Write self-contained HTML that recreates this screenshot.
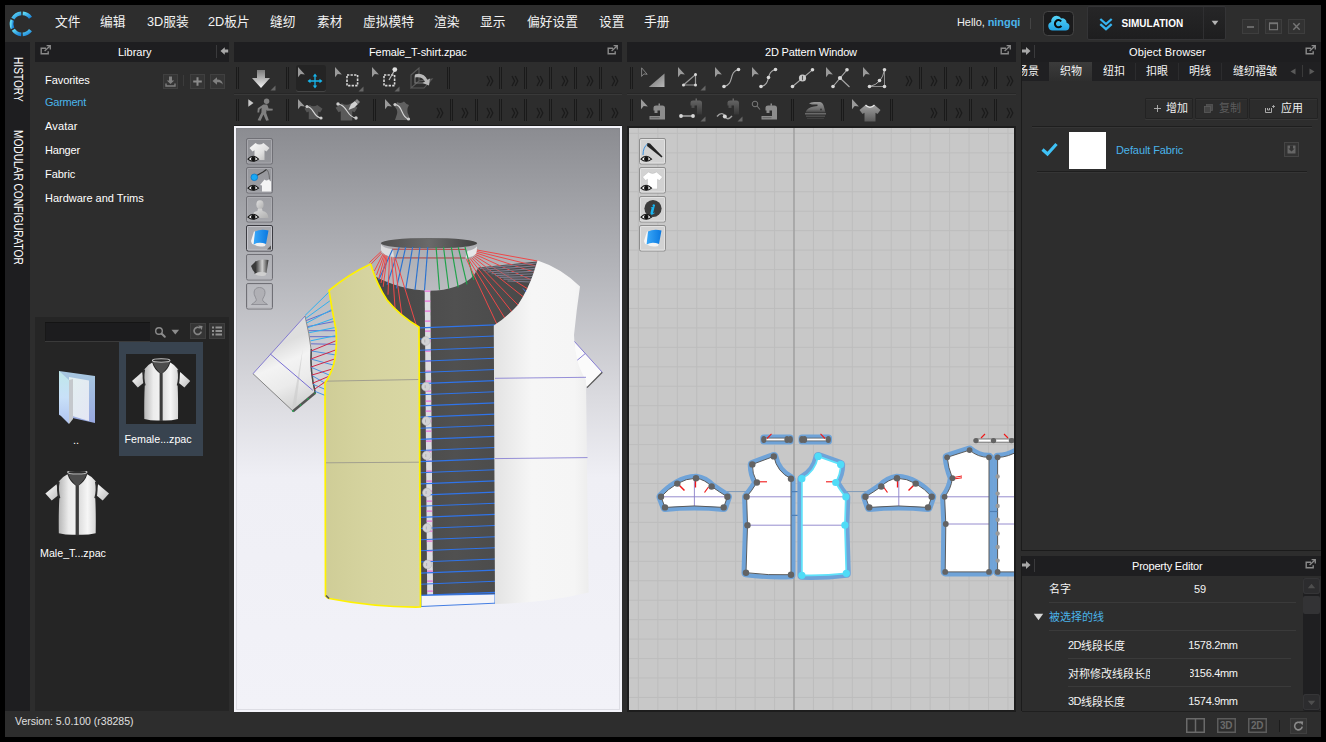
<!DOCTYPE html>
<html><head><meta charset="utf-8"><title>CLO - Female_T-shirt.zpac</title>
<style>
html,body{margin:0;padding:0;}
body{width:1326px;height:742px;background:#000;overflow:hidden;position:relative;font-family:"Liberation Sans", sans-serif;}
.a{position:absolute;display:block;}
.t{white-space:nowrap;line-height:1.2;}
.h{color:transparent;overflow:hidden;white-space:nowrap;line-height:1.4;user-select:none;}
.b{font-weight:bold;}
svg text{font-family:"Liberation Sans", "Noto Sans CJK SC", sans-serif;}
</style></head><body>
<div class="a" style="left:5px;top:5px;width:1316px;height:732px;background:#2d2d2d;"></div><svg class="a" style="left:5px;top:7px;" width="32" height="32" viewBox="0 0 32 32"><defs><linearGradient id="lg" x1="0" y1="0" x2="1" y2="1"><stop offset="0" stop-color="#5fd8f5"/><stop offset="1" stop-color="#1b83d8"/></linearGradient></defs><path d="M17.73 6.43A10.5 10.5 0 0 1 25.49 10.73" fill="none" stroke="url(#lg)" stroke-width="3.7"/><path d="M25.49 23.07A10.5 10.5 0 0 1 17.73 27.37" fill="none" stroke="url(#lg)" stroke-width="3.7"/><path d="M16.27 27.37A10.5 10.5 0 0 1 8.30 22.77" fill="none" stroke="url(#lg)" stroke-width="3.7"/><path d="M7.56 21.50A10.5 10.5 0 0 1 7.26 12.97" fill="none" stroke="url(#lg)" stroke-width="3.7"/><path d="M7.91 11.65A10.5 10.5 0 0 1 16.27 6.43" fill="none" stroke="url(#lg)" stroke-width="3.7"/></svg><svg class="a" style="left:54.6px;top:13.1px" width="28" height="17.8" viewBox="0 -12.8 28 17.8"><text x="0" y="0" font-size="12.75" fill="#f2f2f2">文件</text></svg><svg class="a" style="left:100.4px;top:13.1px" width="28" height="17.8" viewBox="0 -12.8 28 17.8"><text x="0" y="0" font-size="12.75" fill="#f2f2f2">编辑</text></svg><svg class="a" style="left:146.6px;top:13.1px" width="44" height="17.8" viewBox="0 -12.8 44 17.8"><text x="0" y="0" font-size="12.75" fill="#f2f2f2">3D服装</text></svg><svg class="a" style="left:208.2px;top:13.1px" width="44" height="17.8" viewBox="0 -12.8 44 17.8"><text x="0" y="0" font-size="12.75" fill="#f2f2f2">2D板片</text></svg><svg class="a" style="left:270.2px;top:13.1px" width="28" height="17.8" viewBox="0 -12.8 28 17.8"><text x="0" y="0" font-size="12.75" fill="#f2f2f2">缝纫</text></svg><svg class="a" style="left:316.5px;top:13.1px" width="28" height="17.8" viewBox="0 -12.8 28 17.8"><text x="0" y="0" font-size="12.75" fill="#f2f2f2">素材</text></svg><svg class="a" style="left:362.6px;top:13.1px" width="53" height="17.8" viewBox="0 -12.8 53 17.8"><text x="0" y="0" font-size="12.75" fill="#f2f2f2">虚拟模特</text></svg><svg class="a" style="left:434.2px;top:13.1px" width="28" height="17.8" viewBox="0 -12.8 28 17.8"><text x="0" y="0" font-size="12.75" fill="#f2f2f2">渲染</text></svg><svg class="a" style="left:480.4px;top:13.1px" width="28" height="17.8" viewBox="0 -12.8 28 17.8"><text x="0" y="0" font-size="12.75" fill="#f2f2f2">显示</text></svg><svg class="a" style="left:526.7px;top:13.1px" width="53" height="17.8" viewBox="0 -12.8 53 17.8"><text x="0" y="0" font-size="12.75" fill="#f2f2f2">偏好设置</text></svg><svg class="a" style="left:598.5px;top:13.1px" width="28" height="17.8" viewBox="0 -12.8 28 17.8"><text x="0" y="0" font-size="12.75" fill="#f2f2f2">设置</text></svg><svg class="a" style="left:644.4px;top:13.1px" width="28" height="17.8" viewBox="0 -12.8 28 17.8"><text x="0" y="0" font-size="12.75" fill="#f2f2f2">手册</text></svg><div class="a t" style="left:957px;top:16px;font-size:11px;letter-spacing:-0.07px;color:#f0f0f0">Hello, <b style="color:#4ab4ea">ningqi</b></div><div class="a" style="left:1030px;top:18px;width:1px;height:11px;background:#444;"></div><svg class="a" style="left:1043px;top:10.5px;" width="31" height="25" viewBox="0 0 31 25"><defs><linearGradient id="cg" x1="0" y1="0" x2="0" y2="1"><stop offset="0" stop-color="#55d4f8"/><stop offset="1" stop-color="#22a4e4"/></linearGradient></defs><rect x="0.5" y="0.5" width="30" height="24" rx="4" fill="#1b1b1c" stroke="#444" /><path d="M9.5 19.5a4.3 4.3 0 0 1 -1.2 -8.4a5.2 5.2 0 0 1 5.2 -6.3a5.6 5.6 0 0 1 4.8 2.6a4.4 4.4 0 0 1 5.3 4.3a4 4 0 0 1 -1.6 7.8z" fill="url(#cg)"/><path d="M18.2 10.3a3.6 3.6 0 1 0 0.2 4.6" fill="none" stroke="#0a0a0a" stroke-width="2"/></svg><div class="a" style="left:1087px;top:6px;width:139px;height:34px;background:#222223;border-radius:2px;box-sizing:border-box;border:1px solid #343436;background:linear-gradient(#262627,#1e1e1f)"></div><div class="a" style="left:1203px;top:7px;width:1px;height:32px;background:#2f2f31;"></div><svg class="a" style="left:1098px;top:16px;" width="16" height="16" viewBox="0 0 16 16"><path d="M2.3 3L8 8L13.7 3M2.3 8.2L8 13.2L13.7 8.2" fill="none" stroke="#36b4f0" stroke-width="2.3"/></svg><div class="a t " style="left:1121.5px;top:17.5px;font-size:10px;color:#fff;font-weight:bold;letter-spacing:0.02px">SIMULATION</div><svg class="a" style="left:1211px;top:20px;" width="8" height="6" viewBox="0 0 8 6"><path d="M0.6 0.8h6.8l-3.4 4.4z" fill="#b4b4b4"/></svg><svg class="a" style="left:1242px;top:18.5px;" width="17" height="15" viewBox="0 0 17 15"><rect x="0.5" y="0.5" width="16" height="14" fill="#323232" stroke="#3e3e3e"/><path d="M5 8h7" stroke="#767676" stroke-width="1.6"/></svg><svg class="a" style="left:1265px;top:18.5px;" width="17" height="15" viewBox="0 0 17 15"><rect x="0.5" y="0.5" width="16" height="14" fill="#323232" stroke="#3e3e3e"/><rect x="4.5" y="4.3" width="8" height="6.4" fill="none" stroke="#767676" stroke-width="1.1"/><path d="M4 4.3h9" stroke="#767676" stroke-width="1.8"/></svg><svg class="a" style="left:1287.5px;top:18.5px;" width="17" height="15" viewBox="0 0 17 15"><rect x="0.5" y="0.5" width="16" height="14" fill="#323232" stroke="#3e3e3e"/><path d="M5.3 4.3l6.4 6.4m0 -6.4l-6.4 6.4" stroke="#767676" stroke-width="1.4"/></svg><div class="a" style="left:5px;top:42px;width:25px;height:669px;background:#1e1e20;"></div><div class="a t" style="left:25.5px;top:56.5px;font-size:13px;color:#fff;transform-origin:0 0;transform:rotate(90deg) scale(0.78,1)">HISTORY</div><div class="a t" style="left:25.5px;top:129.5px;font-size:13px;color:#fff;transform-origin:0 0;transform:rotate(90deg) scale(0.78,1)">MODULAR CONFIGURATOR</div><div class="a t " style="left:15px;top:714.5px;font-size:10.5px;color:#e0e0e0;">Version: 5.0.100 (r38285)</div><svg class="a" style="left:1186px;top:718px;" width="19" height="15" viewBox="0 0 19 15"><rect x="0.75" y="0.75" width="17.5" height="13.5" fill="none" stroke="#6a6a6a" stroke-width="1.5"/><path d="M9.5 1v13" stroke="#6a6a6a" stroke-width="1.5"/></svg><svg class="a" style="left:1217px;top:718px;" width="19" height="15" viewBox="0 0 19 15"><rect x="0.75" y="0.75" width="17.5" height="13.5" fill="none" stroke="#5c5c5c" stroke-width="1.5"/></svg><div class="a t " style="left:1220px;top:720px;font-size:10px;color:#6a6a6a;font-weight:bold;letter-spacing:-0.3px">3D</div><svg class="a" style="left:1248px;top:718px;" width="19" height="15" viewBox="0 0 19 15"><rect x="0.75" y="0.75" width="17.5" height="13.5" fill="none" stroke="#5c5c5c" stroke-width="1.5"/></svg><div class="a t " style="left:1251px;top:720px;font-size:10px;color:#6a6a6a;font-weight:bold;letter-spacing:-0.3px">2D</div><div class="a" style="left:1279px;top:720px;width:1px;height:12px;background:#1c1c1c;"></div><svg class="a" style="left:1290px;top:717.5px;" width="17" height="16" viewBox="0 0 17 16"><rect x="0.5" y="0.5" width="16" height="15" fill="#353535" stroke="#404040"/><path d="M12.2 8.6a3.8 3.8 0 1 1 -1.5 -3.6" fill="none" stroke="#8a8a8a" stroke-width="1.6"/><path d="M9.2 3.2l4 0.2l-0.6 3.8z" fill="#8a8a8a"/></svg><div class="a" style="left:35px;top:42px;width:194px;height:20px;background:#1e1e20;"></div><svg class="a" style="left:40px;top:45px;" width="12" height="11" viewBox="0 0 12 11"><path d="M6 3.2H1.2V8.8H8.2V6.2" fill="none" stroke="#8a8a8a" stroke-width="1.4"/><path d="M4.6 5.9L10 0.9M6.6 0.7h3.7v3.7" fill="none" stroke="#8a8a8a" stroke-width="1.3"/></svg><div class="a t " style="left:118px;top:45.5px;font-size:11px;color:#fff;">Library</div><div class="a" style="left:216px;top:45px;width:1px;height:13px;background:#3a3a3c;"></div><svg class="a" style="left:220px;top:46px;" width="9" height="10" viewBox="0 0 9 10"><path d="M0.5 5L4.8 1.2v2.3h3.4v3h-3.4v2.3z" fill="#a8a8a8"/></svg><div class="a t " style="left:45px;top:74px;font-size:11px;color:#fff;letter-spacing:-0.065px">Favorites</div><div class="a t " style="left:45px;top:96px;font-size:11px;color:#4ab4ea;letter-spacing:-0.25px">Garment</div><div class="a t " style="left:45px;top:120px;font-size:11px;color:#fff;letter-spacing:0.16px">Avatar</div><div class="a t " style="left:45px;top:144px;font-size:11px;color:#fff;letter-spacing:-0.19px">Hanger</div><div class="a t " style="left:45px;top:168px;font-size:11px;color:#fff;letter-spacing:-0.06px">Fabric</div><div class="a t " style="left:45px;top:192px;font-size:11px;color:#fff;letter-spacing:-0.02px">Hardware and Trims</div><svg class="a" style="left:163px;top:73.5px;" width="15" height="15" viewBox="0 0 15 15"><rect x="0.5" y="0.5" width="14" height="14" fill="#353535" stroke="#404040"/><path d="M6 2.5h3v4h2.2L7.5 10L3.8 6.5H6z" fill="#808080"/><path d="M3 9.5v2.5h9V9.5" fill="none" stroke="#808080" stroke-width="1.4"/></svg><div class="a" style="left:183px;top:75px;width:1px;height:11px;background:#3c3c3c;"></div><svg class="a" style="left:190px;top:73.5px;" width="15" height="15" viewBox="0 0 15 15"><rect x="0.5" y="0.5" width="14" height="14" fill="#353535" stroke="#404040"/><path d="M7.5 3.2v8.6M3.2 7.5h8.6" stroke="#8a8a8a" stroke-width="2"/></svg><svg class="a" style="left:210px;top:73.5px;" width="15" height="15" viewBox="0 0 15 15"><rect x="0.5" y="0.5" width="14" height="14" fill="#353535" stroke="#404040"/><path d="M2.5 7L7 3.2v2.3c3.5 0 5.5 1.8 5.8 5c-1.3-1.7-3-2.3-5.8-2.2v2.4z" fill="#808080"/></svg><div class="a" style="left:35px;top:317px;width:194px;height:394px;background:#252525;"></div><div class="a" style="left:45px;top:322px;width:105px;height:18.5px;background:#1c1c1e;box-shadow:inset 0 1px 0 #141414, inset 1px 0 0 #181818, 0 1px 0 #3a3a3a"></div><svg class="a" style="left:154px;top:326px;" width="13" height="13" viewBox="0 0 13 13"><circle cx="5" cy="5" r="3.3" fill="none" stroke="#8c8c8c" stroke-width="1.4"/><path d="M7.5 7.5l3.3 3.3" stroke="#8c8c8c" stroke-width="2" stroke-linecap="round"/></svg><svg class="a" style="left:171px;top:329px;" width="9" height="7" viewBox="0 0 9 7"><path d="M0.5 0.8h7.6l-3.8 4.8z" fill="#8c8c8c"/></svg><svg class="a" style="left:190px;top:323px;" width="16" height="16" viewBox="0 0 16 16"><rect x="0.5" y="0.5" width="15" height="15" fill="#353535" stroke="#404040"/><path d="M11.2 8.6a3.6 3.6 0 1 1 -1.3 -3.6" fill="none" stroke="#858585" stroke-width="1.7"/><path d="M8.3 2.6l4.3 0.3l-0.8 4z" fill="#858585"/></svg><svg class="a" style="left:209px;top:323px;" width="16" height="16" viewBox="0 0 16 16"><rect x="0.5" y="0.5" width="15" height="15" fill="#353535" stroke="#404040"/><path d="M3 4.5h2M3 8h2M3 11.5h2" stroke="#909090" stroke-width="1.8"/><path d="M6.5 4.5h6.5M6.5 8h6.5M6.5 11.5h6.5" stroke="#909090" stroke-width="1.8"/></svg><div class="a" style="left:119px;top:342px;width:84px;height:114px;background:#38434f;"></div><div class="a" style="left:126px;top:354px;width:70px;height:70px;background:#222222;"></div><svg class="a" style="left:126px;top:354px;" width="70" height="70" viewBox="0 0 70 70"><defs><linearGradient id="fa" x1="0" x2="1"><stop offset="0" stop-color="#b4b4b4"/><stop offset="0.6" stop-color="#ececec"/><stop offset="1" stop-color="#f2f2f2"/></linearGradient><linearGradient id="fb" x1="0" x2="1"><stop offset="0" stop-color="#dcdcdc"/><stop offset="0.5" stop-color="#f6f6f6"/><stop offset="1" stop-color="#d4d4d4"/></linearGradient><linearGradient id="fc" x1="0" y1="0" x2="1" y2="1"><stop offset="0" stop-color="#ffffff"/><stop offset="1" stop-color="#bcbcbc"/></linearGradient></defs><path d="M26.4 7.5Q35.2 10.5 44.1 7.5L41.5 13L36.2 19.5H34.2L29 13z" fill="#4c4c4c"/><ellipse cx="35.2" cy="6.5" rx="8.8" ry="1.7" fill="#2c2c2c" stroke="#c4c4c4" stroke-width="1.1"/><path d="M16.2 18L6 27L11.8 33.6L18.3 28.2z" fill="url(#fc)"/><path d="M54.2 18L64.2 27L58.4 33.6L52 28.2z" fill="url(#fc)"/><path d="M18.2 15.5Q22 10.5 26.2 8.5Q28 15 33.8 19.5L33.8 66.5Q26 67 18.3 65Q18 45 18.8 31Q16.8 24 18.2 15.5z" fill="url(#fa)"/><path d="M52.2 15.5Q48.5 10.5 44.3 8.5Q42.5 15 36.4 19.5L36.4 66.5Q44 67 52 65Q52.3 45 51.6 31Q53.6 24 52.2 15.5z" fill="url(#fb)"/><path d="M33.8 19.5h2.6v47.5h-2.6z" fill="#3c3c3c"/><path d="M18.2 15.5Q16.6 24 18.8 31.5" fill="none" stroke="#2c2c2c" stroke-width="1.8"/><path d="M52.2 15.5Q53.8 24 51.6 31.5" fill="none" stroke="#2c2c2c" stroke-width="1.8"/></svg><div class="a t " style="left:124.5px;top:433.2px;font-size:10.7px;color:#fff;">Female...zpac</div><svg class="a" style="left:59px;top:371px;" width="37" height="54" viewBox="0 0 37 54"><defs><linearGradient id="fo1" x1="0" y1="0" x2="0" y2="1"><stop offset="0" stop-color="#bfe8ea"/><stop offset="0.5" stop-color="#c8e0f8"/><stop offset="1" stop-color="#b0c4f0"/></linearGradient><linearGradient id="fo2" x1="0" y1="0" x2="1" y2="1"><stop offset="0" stop-color="#e2f0f0"/><stop offset="1" stop-color="#e4e6f4"/></linearGradient><linearGradient id="fo3" x1="0" y1="0" x2="0" y2="1"><stop offset="0" stop-color="#a8c8e0"/><stop offset="1" stop-color="#98a8e0"/></linearGradient></defs><path d="M0 0L36 5V52L0 44z" fill="url(#fo3)"/><path d="M10 6L30 9.5V50L10 44z" fill="url(#fo2)"/><path d="M0 0L10 9V53L0 43z" fill="url(#fo1)"/><path d="M10 9L14 8V48L10 53z" fill="#c4c8cc"/></svg><div class="a t " style="left:73px;top:433.5px;font-size:11px;color:#fff;">..</div><svg class="a" style="left:45px;top:470.5px;" width="64" height="66" viewBox="0 0 64 66"><g transform="translate(-6.2,-5.6) scale(1.094,1.043)"><path d="M26.4 7.5Q35.2 10.5 44.1 7.5L41.5 13L36.2 19.5H34.2L29 13z" fill="#4c4c4c"/><ellipse cx="35.2" cy="6.5" rx="8.8" ry="1.7" fill="#2c2c2c" stroke="#c4c4c4" stroke-width="1.1"/><path d="M16.2 18L6 27L11.8 33.6L18.3 28.2z" fill="url(#fc)"/><path d="M54.2 18L64.2 27L58.4 33.6L52 28.2z" fill="url(#fc)"/><path d="M18.2 15.5Q22 10.5 26.2 8.5Q28 15 33.8 19.5L33.8 66.5Q26 67 18.3 65Q18 45 18.8 31Q16.8 24 18.2 15.5z" fill="url(#fa)"/><path d="M52.2 15.5Q48.5 10.5 44.3 8.5Q42.5 15 36.4 19.5L36.4 66.5Q44 67 52 65Q52.3 45 51.6 31Q53.6 24 52.2 15.5z" fill="url(#fb)"/><path d="M33.8 19.5h2.6v47.5h-2.6z" fill="#3c3c3c"/><path d="M18.2 15.5Q16.6 24 18.8 31.5" fill="none" stroke="#2c2c2c" stroke-width="1.8"/><path d="M52.2 15.5Q53.8 24 51.6 31.5" fill="none" stroke="#2c2c2c" stroke-width="1.8"/></g></svg><div class="a t " style="left:40px;top:547.2px;font-size:10.7px;color:#fff;">Male_T...zpac</div><div class="a" style="left:234px;top:42px;width:388px;height:20px;background:#1e1e20;"></div><div class="a t " style="left:369px;top:45.5px;font-size:11px;color:#fff;letter-spacing:-0.1px">Female_T-shirt.zpac</div><svg class="a" style="left:607px;top:45px;" width="12" height="11" viewBox="0 0 12 11"><path d="M6 3.2H1.2V8.8H8.2V6.2" fill="none" stroke="#8a8a8a" stroke-width="1.4"/><path d="M4.6 5.9L10 0.9M6.6 0.7h3.7v3.7" fill="none" stroke="#8a8a8a" stroke-width="1.3"/></svg><div class="a" style="left:234px;top:93px;width:388px;height:1px;background:#272727;"></div><div class="a" style="left:234px;top:94px;width:388px;height:1px;background:#393939;"></div><div class="a" style="left:627px;top:93px;width:389px;height:1px;background:#272727;"></div><div class="a" style="left:627px;top:94px;width:389px;height:1px;background:#393939;"></div><div class="a" style="left:236px;top:67px;width:1px;height:22px;background:#1a1a1a;"></div><div class="a" style="left:238px;top:67px;width:1px;height:22px;background:#1a1a1a;"></div><div class="a" style="left:285.8px;top:67px;width:1px;height:22px;background:#1a1a1a;"></div><div class="a" style="left:287.8px;top:67px;width:1px;height:22px;background:#1a1a1a;"></div><div class="a" style="left:447px;top:67px;width:1px;height:22px;background:#1a1a1a;"></div><div class="a" style="left:449px;top:67px;width:1px;height:22px;background:#1a1a1a;"></div><div class="a" style="left:499px;top:67px;width:1px;height:22px;background:#1a1a1a;"></div><div class="a" style="left:501px;top:67px;width:1px;height:22px;background:#1a1a1a;"></div><div class="a" style="left:524px;top:67px;width:1px;height:22px;background:#1a1a1a;"></div><div class="a" style="left:526px;top:67px;width:1px;height:22px;background:#1a1a1a;"></div><div class="a" style="left:549px;top:67px;width:1px;height:22px;background:#1a1a1a;"></div><div class="a" style="left:551px;top:67px;width:1px;height:22px;background:#1a1a1a;"></div><div class="a" style="left:574px;top:67px;width:1px;height:22px;background:#1a1a1a;"></div><div class="a" style="left:576px;top:67px;width:1px;height:22px;background:#1a1a1a;"></div><div class="a" style="left:599px;top:67px;width:1px;height:22px;background:#1a1a1a;"></div><div class="a" style="left:601px;top:67px;width:1px;height:22px;background:#1a1a1a;"></div><svg class="a" style="left:486px;top:74.5px;" width="8" height="12" viewBox="0 0 8 12"><path d="M1 1L3.6 6L1 11M4.2 1L6.8 6L4.2 11" fill="none" stroke="#1b1b1b" stroke-width="1.25"/></svg><svg class="a" style="left:511px;top:74.5px;" width="8" height="12" viewBox="0 0 8 12"><path d="M1 1L3.6 6L1 11M4.2 1L6.8 6L4.2 11" fill="none" stroke="#1b1b1b" stroke-width="1.25"/></svg><svg class="a" style="left:536px;top:74.5px;" width="8" height="12" viewBox="0 0 8 12"><path d="M1 1L3.6 6L1 11M4.2 1L6.8 6L4.2 11" fill="none" stroke="#1b1b1b" stroke-width="1.25"/></svg><svg class="a" style="left:561px;top:74.5px;" width="8" height="12" viewBox="0 0 8 12"><path d="M1 1L3.6 6L1 11M4.2 1L6.8 6L4.2 11" fill="none" stroke="#1b1b1b" stroke-width="1.25"/></svg><svg class="a" style="left:586px;top:74.5px;" width="8" height="12" viewBox="0 0 8 12"><path d="M1 1L3.6 6L1 11M4.2 1L6.8 6L4.2 11" fill="none" stroke="#1b1b1b" stroke-width="1.25"/></svg><svg class="a" style="left:611px;top:74.5px;" width="8" height="12" viewBox="0 0 8 12"><path d="M1 1L3.6 6L1 11M4.2 1L6.8 6L4.2 11" fill="none" stroke="#1b1b1b" stroke-width="1.25"/></svg><div class="a" style="left:236px;top:99px;width:1px;height:22px;background:#1a1a1a;"></div><div class="a" style="left:238px;top:99px;width:1px;height:22px;background:#1a1a1a;"></div><div class="a" style="left:285.8px;top:99px;width:1px;height:22px;background:#1a1a1a;"></div><div class="a" style="left:287.8px;top:99px;width:1px;height:22px;background:#1a1a1a;"></div><div class="a" style="left:373px;top:99px;width:1px;height:22px;background:#1a1a1a;"></div><div class="a" style="left:375px;top:99px;width:1px;height:22px;background:#1a1a1a;"></div><div class="a" style="left:449.5px;top:99px;width:1px;height:22px;background:#1a1a1a;"></div><div class="a" style="left:451.5px;top:99px;width:1px;height:22px;background:#1a1a1a;"></div><div class="a" style="left:474.5px;top:99px;width:1px;height:22px;background:#1a1a1a;"></div><div class="a" style="left:476.5px;top:99px;width:1px;height:22px;background:#1a1a1a;"></div><div class="a" style="left:499px;top:99px;width:1px;height:22px;background:#1a1a1a;"></div><div class="a" style="left:501px;top:99px;width:1px;height:22px;background:#1a1a1a;"></div><div class="a" style="left:524px;top:99px;width:1px;height:22px;background:#1a1a1a;"></div><div class="a" style="left:526px;top:99px;width:1px;height:22px;background:#1a1a1a;"></div><div class="a" style="left:549px;top:99px;width:1px;height:22px;background:#1a1a1a;"></div><div class="a" style="left:551px;top:99px;width:1px;height:22px;background:#1a1a1a;"></div><div class="a" style="left:574px;top:99px;width:1px;height:22px;background:#1a1a1a;"></div><div class="a" style="left:576px;top:99px;width:1px;height:22px;background:#1a1a1a;"></div><div class="a" style="left:599px;top:99px;width:1px;height:22px;background:#1a1a1a;"></div><div class="a" style="left:601px;top:99px;width:1px;height:22px;background:#1a1a1a;"></div><svg class="a" style="left:436px;top:106.5px;" width="8" height="12" viewBox="0 0 8 12"><path d="M1 1L3.6 6L1 11M4.2 1L6.8 6L4.2 11" fill="none" stroke="#1b1b1b" stroke-width="1.25"/></svg><svg class="a" style="left:461px;top:106.5px;" width="8" height="12" viewBox="0 0 8 12"><path d="M1 1L3.6 6L1 11M4.2 1L6.8 6L4.2 11" fill="none" stroke="#1b1b1b" stroke-width="1.25"/></svg><svg class="a" style="left:486px;top:106.5px;" width="8" height="12" viewBox="0 0 8 12"><path d="M1 1L3.6 6L1 11M4.2 1L6.8 6L4.2 11" fill="none" stroke="#1b1b1b" stroke-width="1.25"/></svg><svg class="a" style="left:511px;top:106.5px;" width="8" height="12" viewBox="0 0 8 12"><path d="M1 1L3.6 6L1 11M4.2 1L6.8 6L4.2 11" fill="none" stroke="#1b1b1b" stroke-width="1.25"/></svg><svg class="a" style="left:536px;top:106.5px;" width="8" height="12" viewBox="0 0 8 12"><path d="M1 1L3.6 6L1 11M4.2 1L6.8 6L4.2 11" fill="none" stroke="#1b1b1b" stroke-width="1.25"/></svg><svg class="a" style="left:561px;top:106.5px;" width="8" height="12" viewBox="0 0 8 12"><path d="M1 1L3.6 6L1 11M4.2 1L6.8 6L4.2 11" fill="none" stroke="#1b1b1b" stroke-width="1.25"/></svg><svg class="a" style="left:586px;top:106.5px;" width="8" height="12" viewBox="0 0 8 12"><path d="M1 1L3.6 6L1 11M4.2 1L6.8 6L4.2 11" fill="none" stroke="#1b1b1b" stroke-width="1.25"/></svg><svg class="a" style="left:611px;top:106.5px;" width="8" height="12" viewBox="0 0 8 12"><path d="M1 1L3.6 6L1 11M4.2 1L6.8 6L4.2 11" fill="none" stroke="#1b1b1b" stroke-width="1.25"/></svg><svg class="a" style="left:251px;top:69px;" width="20" height="20" viewBox="0 0 20 20"><defs><linearGradient id="gw" x1="0" y1="0" x2="0" y2="1"><stop offset="0" stop-color="#7a7a7a"/><stop offset="1" stop-color="#f4f4f4"/></linearGradient></defs><path d="M6 1h8v8h5L10 19L1 9h5z" fill="url(#gw)"/></svg><svg class="a" style="left:269.5px;top:84.5px;" width="6" height="6" viewBox="0 0 6 6"><path d="M5.5 0.5V5.5H0.5z" fill="#666"/></svg><div class="a" style="left:296px;top:65px;width:30px;height:26px;background:#242424;border-radius:2.5px;box-shadow:0 1px 0 #444"></div><svg class="a" style="left:298px;top:67px;" width="8" height="11" viewBox="0 0 8 11"><path d="M0 0L0 10.2L2.7 7.1L6.9 7.6z" fill="#9a9a9a"/></svg><svg class="a" style="left:306.7px;top:72.75px;" width="16" height="16" viewBox="0 0 16 16"><path d="M8 2v12M2 8h12" stroke="#17b4ea" stroke-width="1.3"/><path d="M8 0.5l2.2 3h-4.4zM8 15.5l2.2-3h-4.4zM0.5 8l3-2.2v4.4zM15.5 8l-3-2.2v4.4z" fill="#17b4ea"/></svg><svg class="a" style="left:335px;top:67px;" width="8" height="11" viewBox="0 0 8 11"><path d="M0 0L0 10.2L2.7 7.1L6.9 7.6z" fill="#9a9a9a"/></svg><svg class="a" style="left:345px;top:73px;" width="15" height="15" viewBox="0 0 15 15"><rect x="2" y="2" width="10.6" height="10.6" fill="none" stroke="#d8d8d8" stroke-width="1.6" stroke-dasharray="2.3 1.25"/></svg><svg class="a" style="left:357.5px;top:85.5px;" width="6" height="6" viewBox="0 0 6 6"><path d="M5.5 0.5V5.5H0.5z" fill="#666"/></svg><svg class="a" style="left:372px;top:67px;" width="8" height="11" viewBox="0 0 8 11"><path d="M0 0L0 10.2L2.7 7.1L6.9 7.6z" fill="#9a9a9a"/></svg><svg class="a" style="left:382px;top:66px;" width="18" height="22" viewBox="0 0 18 22"><rect x="2" y="9" width="10.6" height="10.6" fill="none" stroke="#d8d8d8" stroke-width="1.6" stroke-dasharray="2.3 1.25"/><path d="M7 14L12.5 4.5" stroke="#bbb" stroke-width="1.2"/><circle cx="12.8" cy="3.6" r="2.4" fill="#e0e0e0"/></svg><svg class="a" style="left:393.5px;top:85.5px;" width="6" height="6" viewBox="0 0 6 6"><path d="M5.5 0.5V5.5H0.5z" fill="#666"/></svg><svg class="a" style="left:410px;top:67px;" width="24" height="22" viewBox="0 0 24 22"><path d="M1 8L9 1V14L1 21z M9 14L22 12L14 21H1" fill="none" stroke="#5a5a5a" stroke-width="1.1"/><path d="M5 8.5L5 16H15" fill="none" stroke="#777" stroke-width="1.2"/><path d="M5 7.5C10 5.5 15 7.5 17.5 13L20 11.5L19 18.5L12.5 16L15 14.5C13 10.5 9.5 9.5 5 10.5z" fill="#b8b8b8"/></svg><svg class="a" style="left:247.8px;top:99px;" width="6" height="9" viewBox="0 0 6 9"><path d="M0.3 0.3L5.5 4L0.3 7.8z" fill="#c8c8c8"/></svg><svg class="a" style="left:255px;top:97px;" width="20" height="25" viewBox="0 0 20 25"><circle cx="11.6" cy="4.2" r="2.7" fill="#808080"/><path d="M8.3 7.6L12.2 7.4L13.6 11.6L17.8 11.7L17.6 13.6L12.2 13.8L11.6 12.8L11.2 16L13.8 23.2L11.2 23.8L8.4 17.6L5.6 23.8L2.6 23.2L6.4 15.4L6.6 10.8L4.6 12.4L4.2 15.6L2.4 15.4L2.8 11.2z" fill="#808080"/></svg><svg class="a" style="left:298px;top:99px;" width="8" height="11" viewBox="0 0 8 11"><path d="M0 0L0 10.2L2.7 7.1L6.9 7.6z" fill="#9a9a9a"/></svg><svg class="a" style="left:304px;top:104px;" width="19.0" height="16.15" viewBox="0 0 19.0 16.15"><g transform="scale(0.95)"><path d="M6 1Q10 4 14 1L19.5 5L17 9L15 8V16H5V8L3 9L0.5 5z" fill="#555"/></g></svg><svg class="a" style="left:304px;top:103px;" width="20" height="18" viewBox="0 0 20 18"><path d="M3 3.5C10 4 9 14 17 15" fill="none" stroke="#d8d8d8" stroke-width="1.1"/><circle cx="3" cy="3.5" r="1.6" fill="#ccc"/><circle cx="17" cy="15" r="1.6" fill="#ccc"/></svg><svg class="a" style="left:335px;top:102px;" width="23.0" height="19.549999999999997" viewBox="0 0 23.0 19.549999999999997"><g transform="scale(1.15)"><path d="M6 1Q10 4 14 1L19.5 5L17 9L15 8V16H5V8L3 9L0.5 5z" fill="#5a5a5a"/></g></svg><svg class="a" style="left:334px;top:98px;" width="28" height="24" viewBox="0 0 28 24"><path d="M4 6C14 7 12 19 22 20" fill="none" stroke="#d8d8d8" stroke-width="1.1"/><circle cx="4" cy="6" r="1.7" fill="#ccc"/><circle cx="22" cy="20" r="1.7" fill="#ccc"/><path d="M14.5 12L17 6L21 3L24 6L20.5 9.5z" fill="#d0d0d0"/><path d="M21 3L23 1L26 4L24 6z" fill="#8a8a8a"/></svg><svg class="a" style="left:384.5px;top:99px;" width="8" height="11" viewBox="0 0 8 11"><path d="M0 0L0 10.2L2.7 7.1L6.9 7.6z" fill="#9a9a9a"/></svg><svg class="a" style="left:392px;top:101px;" width="20" height="20" viewBox="0 0 20 20"><path d="M5 1Q9 3 12 0.5Q14 3 17 4Q14 9 16.5 14L18 19H3L5 13Q6 8 2 5Q5 3.5 5 1z" fill="#606060"/><path d="M3 3.5C11 4 9 17 16.5 18" fill="none" stroke="#d8d8d8" stroke-width="1.1"/><circle cx="3" cy="3.5" r="1.6" fill="#ccc"/><circle cx="16.5" cy="18" r="1.6" fill="#ccc"/></svg><div class="a" style="left:234px;top:125px;width:388px;height:1px;background:#1c1c1c;"></div><div class="a" style="left:234px;top:126px;width:384px;height:582px;border:2px solid #f4f4fa;box-shadow:inset 0 0 0 1px rgba(110,110,125,0.16);background:linear-gradient(#8b8c91 0%,#b3b4b9 24%,#dadadf 46%,#efeff5 60%,#f2f2f8 100%)"></div><svg class="a" style="left:236px;top:128px" width="384" height="582" viewBox="236 128 384 582"><defs>
<linearGradient id="gy" x1="0" x2="1"><stop offset="0" stop-color="#cfcd97"/><stop offset="0.5" stop-color="#d6d4a0"/><stop offset="1" stop-color="#d9d7a4"/></linearGradient>
<linearGradient id="gwh" x1="0" x2="1"><stop offset="0" stop-color="#e3e3e3"/><stop offset="0.4" stop-color="#f6f6f6"/><stop offset="0.85" stop-color="#f5f5f5"/><stop offset="1" stop-color="#ededed"/></linearGradient>
<linearGradient id="gdk" x1="0" x2="1"><stop offset="0" stop-color="#454545"/><stop offset="0.5" stop-color="#505050"/><stop offset="1" stop-color="#484848"/></linearGradient>
<linearGradient id="gsl" gradientUnits="userSpaceOnUse" x1="279" y1="345" x2="304" y2="402"><stop offset="0" stop-color="#dedede"/><stop offset="0.3" stop-color="#f3f3f3"/><stop offset="0.65" stop-color="#ebebeb"/><stop offset="1" stop-color="#d4d4d4"/></linearGradient>
<linearGradient id="gcol" x1="0" x2="1"><stop offset="0" stop-color="#4e4e4e"/><stop offset="0.5" stop-color="#6a6a6a"/><stop offset="1" stop-color="#404040"/></linearGradient>
</defs><path d="M375.5 276.5C390 284.5 410 290.5 428.7 290.7C448 290.9 466 285 474 275L478.5 267.5L537 261.5L534 272Q528 290 518 305Q507 317 495 326L495 595L421 595L419 327Q400 316 387 300Q377 285 372 266z" fill="url(#gdk)"/><path d="M424.7 290H430.3L433.1 596H427.2z" fill="#dcdce0"/><rect x="424.7" y="290.6" width="5.7" height="1" fill="#ee55d8"/><rect x="424.8" y="300.6" width="5.7" height="1" fill="#ee55d8"/><rect x="424.9" y="310.6" width="5.7" height="1" fill="#ee55d8"/><rect x="424.9" y="320.6" width="5.7" height="1" fill="#ee55d8"/><rect x="425.0" y="330.6" width="5.7" height="1" fill="#ee55d8"/><rect x="425.1" y="340.6" width="5.7" height="1" fill="#ee55d8"/><rect x="425.2" y="350.6" width="5.7" height="1" fill="#ee55d8"/><rect x="425.3" y="360.6" width="5.7" height="1" fill="#ee55d8"/><rect x="425.4" y="370.6" width="5.7" height="1" fill="#ee55d8"/><rect x="425.4" y="380.6" width="5.7" height="1" fill="#ee55d8"/><rect x="425.5" y="390.6" width="5.7" height="1" fill="#ee55d8"/><rect x="425.6" y="400.6" width="5.7" height="1" fill="#ee55d8"/><rect x="425.7" y="410.6" width="5.7" height="1" fill="#ee55d8"/><rect x="425.8" y="420.6" width="5.7" height="1" fill="#ee55d8"/><rect x="425.8" y="430.6" width="5.7" height="1" fill="#ee55d8"/><rect x="425.9" y="440.6" width="5.7" height="1" fill="#ee55d8"/><rect x="426.0" y="450.6" width="5.7" height="1" fill="#ee55d8"/><rect x="426.1" y="460.6" width="5.7" height="1" fill="#ee55d8"/><rect x="426.2" y="470.6" width="5.7" height="1" fill="#ee55d8"/><rect x="426.3" y="480.6" width="5.7" height="1" fill="#ee55d8"/><rect x="426.3" y="490.6" width="5.7" height="1" fill="#ee55d8"/><rect x="426.4" y="500.6" width="5.7" height="1" fill="#ee55d8"/><rect x="426.5" y="510.6" width="5.7" height="1" fill="#ee55d8"/><rect x="426.6" y="520.6" width="5.7" height="1" fill="#ee55d8"/><rect x="426.7" y="530.6" width="5.7" height="1" fill="#ee55d8"/><rect x="426.7" y="540.6" width="5.7" height="1" fill="#ee55d8"/><rect x="426.8" y="550.6" width="5.7" height="1" fill="#ee55d8"/><rect x="426.9" y="560.6" width="5.7" height="1" fill="#ee55d8"/><rect x="427.0" y="570.6" width="5.7" height="1" fill="#ee55d8"/><rect x="427.1" y="580.6" width="5.7" height="1" fill="#ee55d8"/><rect x="427.2" y="590.6" width="5.7" height="1" fill="#ee55d8"/><path d="M420 327.9L495 324.9" stroke="#2f74ea" stroke-width="1.15"/><path d="M420 339.0L495 336.0" stroke="#2f74ea" stroke-width="1.15"/><path d="M420 350.2L495 347.2" stroke="#2f74ea" stroke-width="1.15"/><path d="M420 361.3L495 358.3" stroke="#2f74ea" stroke-width="1.15"/><path d="M420 372.5L495 369.5" stroke="#2f74ea" stroke-width="1.15"/><path d="M420 383.6L495 380.6" stroke="#2f74ea" stroke-width="1.15"/><path d="M420 394.8L495 391.8" stroke="#2f74ea" stroke-width="1.15"/><path d="M420 405.9L495 402.9" stroke="#2f74ea" stroke-width="1.15"/><path d="M420 417.1L495 414.1" stroke="#2f74ea" stroke-width="1.15"/><path d="M420 428.2L495 425.2" stroke="#2f74ea" stroke-width="1.15"/><path d="M420 439.4L495 436.4" stroke="#2f74ea" stroke-width="1.15"/><path d="M420 450.5L495 447.5" stroke="#2f74ea" stroke-width="1.15"/><path d="M420 461.6L495 458.6" stroke="#2f74ea" stroke-width="1.15"/><path d="M420 472.8L495 469.8" stroke="#2f74ea" stroke-width="1.15"/><path d="M420 483.9L495 480.9" stroke="#2f74ea" stroke-width="1.15"/><path d="M420 495.1L495 492.1" stroke="#2f74ea" stroke-width="1.15"/><path d="M420 506.2L495 503.2" stroke="#2f74ea" stroke-width="1.15"/><path d="M420 517.4L495 514.4" stroke="#2f74ea" stroke-width="1.15"/><path d="M420 528.5L495 525.5" stroke="#2f74ea" stroke-width="1.15"/><path d="M420 539.7L495 536.7" stroke="#2f74ea" stroke-width="1.15"/><path d="M420 550.8L495 547.8" stroke="#2f74ea" stroke-width="1.15"/><path d="M420 562.0L495 559.0" stroke="#2f74ea" stroke-width="1.15"/><path d="M420 573.1L495 570.1" stroke="#2f74ea" stroke-width="1.15"/><path d="M420 584.3L495 581.3" stroke="#2f74ea" stroke-width="1.15"/><path d="M420 595.4L495 592.4" stroke="#2f74ea" stroke-width="1.15"/><path d="M421 595.5L495 594L495 603.2L421 606.5z" fill="#f4f4f8" stroke="#2f6fe0" stroke-width="0.9"/><circle cx="425.6" cy="341" r="4.4" fill="#d2d2d5" stroke="#b0b0b4" stroke-width="0.5"/><path d="M424.8 339.5v3" stroke="#9a9aa0" stroke-width="0.6"/><circle cx="426.0" cy="386.7" r="4.4" fill="#d2d2d5" stroke="#b0b0b4" stroke-width="0.5"/><path d="M425.2 385.2v3" stroke="#9a9aa0" stroke-width="0.6"/><circle cx="426.3" cy="421" r="4.4" fill="#d2d2d5" stroke="#b0b0b4" stroke-width="0.5"/><path d="M425.5 419.5v3" stroke="#9a9aa0" stroke-width="0.6"/><circle cx="426.6" cy="455.5" r="4.4" fill="#d2d2d5" stroke="#b0b0b4" stroke-width="0.5"/><path d="M425.8 454.0v3" stroke="#9a9aa0" stroke-width="0.6"/><circle cx="426.9" cy="492.5" r="4.4" fill="#d2d2d5" stroke="#b0b0b4" stroke-width="0.5"/><path d="M426.1 491.0v3" stroke="#9a9aa0" stroke-width="0.6"/><circle cx="427.1" cy="528" r="4.4" fill="#d2d2d5" stroke="#b0b0b4" stroke-width="0.5"/><path d="M426.3 526.5v3" stroke="#9a9aa0" stroke-width="0.6"/><circle cx="427.4" cy="564.5" r="4.4" fill="#d2d2d5" stroke="#b0b0b4" stroke-width="0.5"/><path d="M426.6 563.0v3" stroke="#9a9aa0" stroke-width="0.6"/><ellipse cx="429" cy="243.2" rx="48.2" ry="5.3" fill="url(#gcol)"/><path d="M381 244.2Q383 248 393 249.2L394 257Q384.5 256.5 381 250.5z" fill="#dcdcde"/><path d="M477 246.2Q474 249.8 467.6 250.8L465.5 257.8Q473 257 476.6 253.5z" fill="#e6e6e8"/><path d="M392 249.2L466 249.4" stroke="#b23434" stroke-width="0.9"/><path d="M394.4 257.9L465.5 258" stroke="#a83232" stroke-width="0.9"/><path d="M392.5 249.5L378.7 280.0" stroke="#2a72d0" stroke-width="1.15" opacity="1"/><path d="M399.3 247.0L387.1 284.9" stroke="#2a72d0" stroke-width="1.15" opacity="1"/><path d="M405.7 247.0L396.4 288.3" stroke="#2a72d0" stroke-width="1.15" opacity="1"/><path d="M412.6 247.0L405.7 289.3" stroke="#2a72d0" stroke-width="1.15" opacity="1"/><path d="M419.9 247.0L415.0 290.0" stroke="#2a72d0" stroke-width="1.15" opacity="1"/><path d="M427.8 247.0L424.5 290.3" stroke="#2a72d0" stroke-width="1.15" opacity="1"/><path d="M436.1 247.0L439.5 289.8" stroke="#1fa24a" stroke-width="1.15" opacity="1"/><path d="M443.5 247.0L448.8 288.8" stroke="#1fa24a" stroke-width="1.15" opacity="1"/><path d="M451.3 247.0L458.2 287.3" stroke="#1fa24a" stroke-width="1.15" opacity="1"/><path d="M458.2 247.0L467.0 284.4" stroke="#1fa24a" stroke-width="1.15" opacity="1"/><path d="M465.0 247.0L473.8 280.0" stroke="#1fa24a" stroke-width="1.15" opacity="1"/><path d="M381.7 253.0L370.9 264.3" stroke="#ee4848" stroke-width="1.0" opacity="1"/><path d="M383.2 253.7L374.3 271.1" stroke="#ee4848" stroke-width="1.0" opacity="1"/><path d="M385.1 255.0L378.7 279.0" stroke="#ee4848" stroke-width="1.0" opacity="1"/><path d="M387.1 255.9L383.2 286.8" stroke="#ee4848" stroke-width="1.0" opacity="1"/><path d="M389.5 256.6L388.0 294.7" stroke="#ee4848" stroke-width="1.0" opacity="1"/><path d="M391.7 257.2L395.0 308.0" stroke="#ee4848" stroke-width="1.0" opacity="1"/><path d="M393.9 257.4L402.0 316.0" stroke="#ee4848" stroke-width="1.0" opacity="1"/><path d="M395.4 257.9L416.5 326.0" stroke="#ee4848" stroke-width="1.0" opacity="1"/><path d="M381.2 251.5L369.5 262.5" stroke="#ee4848" stroke-width="1.0" opacity="1"/><path d="M384.2 254.4L376.5 275.0" stroke="#ee4848" stroke-width="1.0" opacity="1"/><path d="M386.1 255.5L381.0 283.0" stroke="#ee4848" stroke-width="1.0" opacity="1"/><path d="M477.0 250.0L537.5 261.0" stroke="#ee4848" stroke-width="1.0" opacity="1"/><path d="M476.8 251.5L536.0 266.0" stroke="#ee4848" stroke-width="1.0" opacity="1"/><path d="M476.2 253.0L534.0 272.0" stroke="#ee4848" stroke-width="1.0" opacity="1"/><path d="M475.5 254.5L531.5 280.0" stroke="#ee4848" stroke-width="1.0" opacity="1"/><path d="M474.5 255.8L528.0 289.0" stroke="#ee4848" stroke-width="1.0" opacity="1"/><path d="M473.0 256.8L523.5 297.0" stroke="#ee4848" stroke-width="1.0" opacity="1"/><path d="M471.5 257.6L518.0 305.0" stroke="#ee4848" stroke-width="1.0" opacity="1"/><path d="M470.0 258.3L512.0 312.0" stroke="#ee4848" stroke-width="1.0" opacity="1"/><path d="M468.3 258.8L505.0 318.5" stroke="#ee4848" stroke-width="1.0" opacity="1"/><path d="M466.5 259.2L497.0 324.5" stroke="#ee4848" stroke-width="1.0" opacity="1"/><path d="M480.0 268.5L537.0 263.0" stroke="#7c7c8e" stroke-width="1.15" opacity="1"/><path d="M483.5 270.2L536.5 265.7" stroke="#7c7c8e" stroke-width="1.15" opacity="1"/><path d="M487.5 272.0L535.8 268.4" stroke="#7c7c8e" stroke-width="1.15" opacity="1"/><path d="M491.5 273.8L535.0 271.1" stroke="#7c7c8e" stroke-width="1.15" opacity="1"/><path d="M495.5 275.6L534.2 273.8" stroke="#7c7c8e" stroke-width="1.15" opacity="1"/><path d="M499.5 277.4L533.4 276.5" stroke="#7c7c8e" stroke-width="1.15" opacity="1"/><path d="M503.5 279.2L532.5 279.2" stroke="#7c7c8e" stroke-width="1.15" opacity="1"/><path d="M507.5 281.0L531.6 282.0" stroke="#7c7c8e" stroke-width="1.15" opacity="1"/><path d="M305 316L253 373.7L293 411.2L315.3 392.8Q309.5 371 311.3 351Q309.5 334 305 316z" fill="url(#gsl)"/><path d="M302.8 349L291.8 409.3L296 405.5z" fill="#cdcdcd" opacity="0.7"/><path d="M253 373.7L293 411.2" stroke="#6a6a6a" stroke-width="0.8"/><path d="M293 411.2L315.3 392.8" stroke="#555" stroke-width="2.6"/><circle cx="293" cy="411" r="1" fill="#2a9a50"/><circle cx="300.5" cy="405" r="1" fill="#2a9a50"/><circle cx="308" cy="399" r="1" fill="#2a9a50"/><circle cx="315" cy="393" r="1" fill="#2a9a50"/><path d="M305 316L253 373.7" stroke="#7a70d0" stroke-width="0.9"/><path d="M270.3 354L312.8 390.3" stroke="#6a5fd0" stroke-width="0.9"/><path d="M315.3 392.8Q309.5 371 311.3 351Q309.5 334 305 316" fill="none" stroke="#777" stroke-width="0.8"/><path d="M315.3 392.8Q309.8 371 311.3 349" fill="none" stroke="#4c4c4c" stroke-width="1.5"/><path d="M306.1 320.6L332.2 310.4" stroke="#5a62c8" stroke-width="0.9" opacity="1"/><path d="M307.6 326.6L333.9 321.6" stroke="#5a62c8" stroke-width="0.9" opacity="1"/><path d="M308.6 330.7L335.0 330.7" stroke="#5a62c8" stroke-width="0.9" opacity="1"/><path d="M309.9 336.7L335.6 336.7" stroke="#5a62c8" stroke-width="0.9" opacity="1"/><path d="M311.0 343.8L335.9 344.4" stroke="#5a62c8" stroke-width="0.9" opacity="1"/><path d="M311.3 350.9L335.2 354.9" stroke="#3a8ae0" stroke-width="0.9" opacity="1"/><path d="M310.8 359.0L333.2 365.0" stroke="#3a8ae0" stroke-width="0.9" opacity="1"/><path d="M310.8 367.1L329.6 375.2" stroke="#3a8ae0" stroke-width="0.9" opacity="1"/><path d="M311.4 375.2L325.0 383.2" stroke="#3a8ae0" stroke-width="0.9" opacity="1"/><path d="M313.0 384.3L325.0 389.3" stroke="#3a8ae0" stroke-width="0.9" opacity="1"/><path d="M314.9 391.3L325.0 395.4" stroke="#3a8ae0" stroke-width="0.9" opacity="1"/><path d="M305.0 315.5L329.2 291.8" stroke="#2fb0f0" stroke-width="1.0" opacity="1"/><path d="M305.6 318.5L330.6 300.3" stroke="#2fb0f0" stroke-width="1.0" opacity="1"/><path d="M306.7 323.0L332.0 309.4" stroke="#2fb0f0" stroke-width="1.0" opacity="1"/><path d="M307.9 327.6L333.5 318.5" stroke="#2fb0f0" stroke-width="1.0" opacity="1"/><path d="M309.1 332.7L334.7 327.6" stroke="#2fb0f0" stroke-width="1.0" opacity="1"/><path d="M310.6 340.8L335.5 335.7" stroke="#2fb0f0" stroke-width="1.0" opacity="1"/><path d="M311.3 350.9L335.8 340.8" stroke="#d02848" stroke-width="1.0" opacity="1"/><path d="M310.8 359.0L335.8 349.9" stroke="#d02848" stroke-width="1.0" opacity="1"/><path d="M310.8 367.1L334.6 359.0" stroke="#d02848" stroke-width="1.0" opacity="1"/><path d="M311.4 375.2L332.0 369.1" stroke="#d02848" stroke-width="1.0" opacity="1"/><path d="M312.7 383.2L329.1 376.2" stroke="#d02848" stroke-width="1.0" opacity="1"/><path d="M314.3 389.3L326.2 381.2" stroke="#d02848" stroke-width="1.0" opacity="1"/><path d="M370.6 264Q349 274 329 290.5Q332 310 336 330Q337.5 350 333.5 365Q330 376 325 383L325.5 596Q327 598 329 598.5Q375 607.5 420.5 607L419 327Q400 316 387 300Q377 285 370.6 264z" fill="url(#gy)"/><path d="M325 381.2L418.5 379.5" stroke="#9c9a8c" stroke-width="0.9"/><path d="M325.5 462.8L419.5 462.2" stroke="#9c9a8c" stroke-width="0.9"/><path d="M370.6 264Q349 274 329 290.5Q332 310 336 330Q337.5 350 333.5 365Q330 376 325 383L325.5 596Q327 598 329 598.5Q375 607.5 420.5 607L419 327Q400 316 387 300Q377 285 370.6 264z" fill="none" stroke="#fff200" stroke-width="1.7" stroke-linejoin="round"/><path d="M326 595.5l3 3" stroke="#555" stroke-width="1.6"/><path d="M574 341L602.3 372.3L587 387.6L576 362z" fill="#fbfbfb"/><path d="M602.3 372.3L587 387.6" stroke="#555" stroke-width="1.3"/><path d="M574 341L602.3 372.3" stroke="#7a70d0" stroke-width="0.9"/><path d="M576.6 360.8L585.2 353.6" stroke="#7a70d0" stroke-width="0.9"/><path d="M537.6 260.5Q561 268 580 286.5Q576.5 310 574 335Q574.5 352 579 366Q583 376 586 380L588.6 592.5Q545 603 495 604L493.8 325.5Q507 317 518 305Q528 290 534 272z" fill="url(#gwh)"/><path d="M495 378.3L586 377.3" stroke="#8a82d4" stroke-width="0.9"/><path d="M495 458.6L587.5 457.6" stroke="#8a82d4" stroke-width="0.9"/><path d="M523 288.5l3 3.5" stroke="#4a78d8" stroke-width="1"/></svg><svg class="a" style="left:246px;top:138px;" width="27" height="27" viewBox="0 0 27 27"><rect x="0.5" y="0.5" width="26" height="25.5" rx="1.5" fill="none" stroke="#707076"/><rect x="1.5" y="1.5" width="24" height="23.5" rx="1" fill="none" stroke="#b0b0b6" stroke-opacity="0.75"/><defs><linearGradient id="ts1" x1="0" y1="0" x2="1" y2="1"><stop offset="0" stop-color="#fafafa"/><stop offset="0.55" stop-color="#e2e2e2"/><stop offset="1" stop-color="#b8b8b8"/></linearGradient></defs><path d="M9.5 5Q13.5 8 17.5 5L23.5 10L20.5 13.5L18.5 12.3V22H8.5V12.3L6.5 13.5L3.5 10z" fill="url(#ts1)"/><g transform="translate(1.6,17.2) scale(1.18)"><path d="M0.3 3.3Q4.5 -1.5 9.3 3.3Q4.5 7 0.3 3.3z" fill="#f4f4f4" stroke="#111" stroke-width="0.9"/><circle cx="4.8" cy="3.2" r="1.9" fill="#111"/></g></svg><svg class="a" style="left:246px;top:167px;" width="27" height="27" viewBox="0 0 27 27"><rect x="0.5" y="0.5" width="26" height="25.5" rx="1.5" fill="none" stroke="#707076"/><rect x="1.5" y="1.5" width="24" height="23.5" rx="1" fill="none" stroke="#b0b0b6" stroke-opacity="0.75"/><path d="M14 18L18.5 12.5Q20.5 14.5 22.5 12.5L25 14.5V24.5H16V18.5z" fill="#f4f4f4"/><path d="M9 9.5L17 5L20.5 2.5" fill="none" stroke="#333" stroke-width="1.2"/><path d="M20.5 2.5Q23 4 23.5 12" fill="none" stroke="#555" stroke-width="0.7"/><circle cx="8.3" cy="10.3" r="3.3" fill="#18a8f4" stroke="#0b78c8" stroke-width="0.8"/><g transform="translate(1.6,17.2) scale(1.18)"><path d="M0.3 3.3Q4.5 -1.5 9.3 3.3Q4.5 7 0.3 3.3z" fill="#f4f4f4" stroke="#111" stroke-width="0.9"/><circle cx="4.8" cy="3.2" r="1.9" fill="#111"/></g></svg><svg class="a" style="left:246px;top:196px;" width="27" height="27" viewBox="0 0 27 27"><rect x="0.5" y="0.5" width="26" height="25.5" rx="1.5" fill="none" stroke="#707076"/><rect x="1.5" y="1.5" width="24" height="23.5" rx="1" fill="none" stroke="#b0b0b6" stroke-opacity="0.75"/><defs><linearGradient id="av1" x1="0" y1="0" x2="1" y2="1"><stop offset="0" stop-color="#e0e0e0"/><stop offset="1" stop-color="#b0b0b0"/></linearGradient></defs><ellipse cx="14" cy="8.5" rx="3.6" ry="4.3" fill="url(#av1)"/><path d="M12 12.5h4l0.6 2.5Q22 16 22.5 22H5.5Q6 16 11.4 15z" fill="url(#av1)"/><g transform="translate(1.6,17.2) scale(1.18)"><path d="M0.3 3.3Q4.5 -1.5 9.3 3.3Q4.5 7 0.3 3.3z" fill="#f4f4f4" stroke="#111" stroke-width="0.9"/><circle cx="4.8" cy="3.2" r="1.9" fill="#111"/></g></svg><svg class="a" style="left:246px;top:225px;" width="27" height="27" viewBox="0 0 27 27"><rect x="0.5" y="0.5" width="26" height="25.5" rx="1.5" fill="#a9a9ae" fill-opacity="0.35" stroke="#3c3c42"/><rect x="1.5" y="1.5" width="24" height="23.5" rx="1" fill="none" stroke="#c4c4ca"/><defs><linearGradient id="fb1" x1="0" y1="0" x2="1" y2="0"><stop offset="0" stop-color="#3aa8f8"/><stop offset="1" stop-color="#0a78e0"/></linearGradient></defs><path d="M5 16L8 6.5Q10 6 9.5 8L8 19.5Q6 20 5 16z" fill="#f4f4f4"/><path d="M8 19.5Q12 22.5 19 21L20 18L8.5 16z" fill="#f0f0f0"/><path d="M9 6.5Q15 3.5 22.5 5.5L20 19Q13 16.5 7.6 19.5z" fill="url(#fb1)"/><path d="M25 20.5v4h-4z" fill="#555"/></svg><svg class="a" style="left:246px;top:254px;" width="27" height="27" viewBox="0 0 27 27"><rect x="0.5" y="0.5" width="26" height="25.5" rx="1.5" fill="none" stroke="#707076"/><rect x="1.5" y="1.5" width="24" height="23.5" rx="1" fill="none" stroke="#b0b0b6" stroke-opacity="0.75"/><defs><linearGradient id="fb2" x1="0" y1="0" x2="1" y2="0"><stop offset="0" stop-color="#222"/><stop offset="0.55" stop-color="#d0d0d0"/><stop offset="1" stop-color="#333"/></linearGradient></defs><path d="M5 12L10 7L9.5 19.5Q6.5 17 5 12z" fill="#3a3a3a"/><path d="M9.5 7.5Q15 4.5 22.5 6L20.5 19Q14 16.5 8.6 20z" fill="url(#fb2)"/><path d="M8.6 20Q13 23 19.5 21.5L20.5 19Q14 16.5 8.6 20z" fill="#cfcfcf"/></svg><svg class="a" style="left:246px;top:283px;" width="27" height="27" viewBox="0 0 27 27"><rect x="0.5" y="0.5" width="26" height="25.5" rx="1.5" fill="none" stroke="#707076"/><rect x="1.5" y="1.5" width="24" height="23.5" rx="1" fill="none" stroke="#b0b0b6" stroke-opacity="0.75"/><path d="M13.5 4.5C9 4.5 7.5 8 8.3 11.5C8.8 13.5 10 15 10.3 16.5C10.5 18.5 8 19.5 5.5 21.5H21.5C19 19.5 16.3 18.5 16.6 16.5C17 14.5 19 13 19 9.5C19 6.5 17 4.5 13.5 4.5z" fill="#b0b0b5" stroke="#88888e" stroke-width="0.8"/></svg><div class="a" style="left:627px;top:42px;width:389px;height:20px;background:#1e1e20;"></div><div class="a t " style="left:765px;top:45.5px;font-size:11px;color:#fff;letter-spacing:-0.17px">2D Pattern Window</div><svg class="a" style="left:1000px;top:45px;" width="12" height="11" viewBox="0 0 12 11"><path d="M6 3.2H1.2V8.8H8.2V6.2" fill="none" stroke="#8a8a8a" stroke-width="1.4"/><path d="M4.6 5.9L10 0.9M6.6 0.7h3.7v3.7" fill="none" stroke="#8a8a8a" stroke-width="1.3"/></svg><div class="a" style="left:629.5px;top:67px;width:1px;height:22px;background:#1a1a1a;"></div><div class="a" style="left:631.5px;top:67px;width:1px;height:22px;background:#1a1a1a;"></div><div class="a" style="left:629.5px;top:99px;width:1px;height:22px;background:#1a1a1a;"></div><div class="a" style="left:631.5px;top:99px;width:1px;height:22px;background:#1a1a1a;"></div><div class="a" style="left:918.5px;top:67px;width:1px;height:22px;background:#1a1a1a;"></div><div class="a" style="left:920.5px;top:67px;width:1px;height:22px;background:#1a1a1a;"></div><div class="a" style="left:943.5px;top:67px;width:1px;height:22px;background:#1a1a1a;"></div><div class="a" style="left:945.5px;top:67px;width:1px;height:22px;background:#1a1a1a;"></div><div class="a" style="left:969px;top:67px;width:1px;height:22px;background:#1a1a1a;"></div><div class="a" style="left:971px;top:67px;width:1px;height:22px;background:#1a1a1a;"></div><div class="a" style="left:994px;top:67px;width:1px;height:22px;background:#1a1a1a;"></div><div class="a" style="left:996px;top:67px;width:1px;height:22px;background:#1a1a1a;"></div><svg class="a" style="left:905px;top:74.5px;" width="8" height="12" viewBox="0 0 8 12"><path d="M1 1L3.6 6L1 11M4.2 1L6.8 6L4.2 11" fill="none" stroke="#1b1b1b" stroke-width="1.25"/></svg><svg class="a" style="left:930px;top:74.5px;" width="8" height="12" viewBox="0 0 8 12"><path d="M1 1L3.6 6L1 11M4.2 1L6.8 6L4.2 11" fill="none" stroke="#1b1b1b" stroke-width="1.25"/></svg><svg class="a" style="left:955px;top:74.5px;" width="8" height="12" viewBox="0 0 8 12"><path d="M1 1L3.6 6L1 11M4.2 1L6.8 6L4.2 11" fill="none" stroke="#1b1b1b" stroke-width="1.25"/></svg><svg class="a" style="left:981px;top:74.5px;" width="8" height="12" viewBox="0 0 8 12"><path d="M1 1L3.6 6L1 11M4.2 1L6.8 6L4.2 11" fill="none" stroke="#1b1b1b" stroke-width="1.25"/></svg><svg class="a" style="left:1005.5px;top:74.5px;" width="8" height="12" viewBox="0 0 8 12"><path d="M1 1L3.6 6L1 11M4.2 1L6.8 6L4.2 11" fill="none" stroke="#1b1b1b" stroke-width="1.25"/></svg><div class="a" style="left:790.5px;top:99px;width:1px;height:22px;background:#1a1a1a;"></div><div class="a" style="left:792.5px;top:99px;width:1px;height:22px;background:#1a1a1a;"></div><div class="a" style="left:840.5px;top:99px;width:1px;height:22px;background:#1a1a1a;"></div><div class="a" style="left:842.5px;top:99px;width:1px;height:22px;background:#1a1a1a;"></div><div class="a" style="left:890px;top:99px;width:1px;height:22px;background:#1a1a1a;"></div><div class="a" style="left:892px;top:99px;width:1px;height:22px;background:#1a1a1a;"></div><div class="a" style="left:943.5px;top:99px;width:1px;height:22px;background:#1a1a1a;"></div><div class="a" style="left:945.5px;top:99px;width:1px;height:22px;background:#1a1a1a;"></div><div class="a" style="left:969px;top:99px;width:1px;height:22px;background:#1a1a1a;"></div><div class="a" style="left:971px;top:99px;width:1px;height:22px;background:#1a1a1a;"></div><div class="a" style="left:994px;top:99px;width:1px;height:22px;background:#1a1a1a;"></div><div class="a" style="left:996px;top:99px;width:1px;height:22px;background:#1a1a1a;"></div><svg class="a" style="left:930px;top:106.5px;" width="8" height="12" viewBox="0 0 8 12"><path d="M1 1L3.6 6L1 11M4.2 1L6.8 6L4.2 11" fill="none" stroke="#1b1b1b" stroke-width="1.25"/></svg><svg class="a" style="left:955px;top:106.5px;" width="8" height="12" viewBox="0 0 8 12"><path d="M1 1L3.6 6L1 11M4.2 1L6.8 6L4.2 11" fill="none" stroke="#1b1b1b" stroke-width="1.25"/></svg><svg class="a" style="left:981px;top:106.5px;" width="8" height="12" viewBox="0 0 8 12"><path d="M1 1L3.6 6L1 11M4.2 1L6.8 6L4.2 11" fill="none" stroke="#1b1b1b" stroke-width="1.25"/></svg><svg class="a" style="left:1005.5px;top:106.5px;" width="8" height="12" viewBox="0 0 8 12"><path d="M1 1L3.6 6L1 11M4.2 1L6.8 6L4.2 11" fill="none" stroke="#1b1b1b" stroke-width="1.25"/></svg><svg class="a" style="left:641px;top:67px;" width="8" height="11" viewBox="0 0 8 11"><path d="M0.6 0.8L0.6 9.4L2.9 6.9L6.2 7.3z" fill="none" stroke="#8a8a8a" stroke-width="0.9"/></svg><svg class="a" style="left:648px;top:73px;" width="18" height="15" viewBox="0 0 18 15"><defs><linearGradient id="g2" x1="0" y1="0" x2="1" y2="1"><stop offset="0" stop-color="#6a6a6a"/><stop offset="1" stop-color="#b8b8b8"/></linearGradient></defs><path d="M16.5 0.5V14H0.8z" fill="url(#g2)"/></svg><svg class="a" style="left:678px;top:67px;" width="8" height="11" viewBox="0 0 8 11"><path d="M0 0L0 10.2L2.7 7.1L6.9 7.6z" fill="#9a9a9a"/></svg><svg class="a" style="left:680px;top:71px;" width="20" height="18" viewBox="0 0 20 18"><path d="M3.5 14H15.5V3.5z" fill="none" stroke="#9a9a9a" stroke-width="1.2"/><circle cx="3.5" cy="14" r="1.5" fill="#d8d8d8"/><circle cx="15.5" cy="14" r="1.5" fill="#d8d8d8"/><circle cx="15.5" cy="3.5" r="1.5" fill="#d8d8d8"/></svg><svg class="a" style="left:700.0px;top:84.5px;" width="6" height="6" viewBox="0 0 6 6"><path d="M5.5 0.5V5.5H0.5z" fill="#666"/></svg><svg class="a" style="left:715px;top:67px;" width="8" height="11" viewBox="0 0 8 11"><path d="M0 0L0 10.2L2.7 7.1L6.9 7.6z" fill="#9a9a9a"/></svg><svg class="a" style="left:720px;top:66px;" width="22" height="24" viewBox="0 0 22 24"><path d="M4 20.5C15 18 8 6 18.5 3.5" fill="none" stroke="#a8a8a8" stroke-width="1.1"/><circle cx="4" cy="20.5" r="1.8" fill="#d8d8d8"/><circle cx="18.5" cy="3.5" r="1.8" fill="#d8d8d8"/></svg><svg class="a" style="left:752px;top:67px;" width="8" height="11" viewBox="0 0 8 11"><path d="M0 0L0 10.2L2.7 7.1L6.9 7.6z" fill="#9a9a9a"/></svg><svg class="a" style="left:757px;top:66px;" width="22" height="24" viewBox="0 0 22 24"><path d="M4 20.5C15 18 8 6 18.5 3.5" fill="none" stroke="#a8a8a8" stroke-width="1.1"/><circle cx="4" cy="20.5" r="1.8" fill="#d8d8d8"/><circle cx="18.5" cy="3.5" r="1.8" fill="#d8d8d8"/><circle cx="11.5" cy="11.5" r="1.8" fill="#d8d8d8"/></svg><svg class="a" style="left:788px;top:66px;" width="28" height="24" viewBox="0 0 28 24"><path d="M4.5 20.5L24.5 3.8" stroke="#a8a8a8" stroke-width="1.1"/><circle cx="4.5" cy="20.5" r="1.8" fill="#d8d8d8"/><circle cx="24.5" cy="3.8" r="1.8" fill="#d8d8d8"/><circle cx="14.5" cy="12" r="3.6" fill="#c8c8c8"/><path d="M14.5 9.8v4.4" stroke="#555" stroke-width="1.1"/></svg><svg class="a" style="left:826px;top:67px;" width="8" height="11" viewBox="0 0 8 11"><path d="M0 0L0 10.2L2.7 7.1L6.9 7.6z" fill="#9a9a9a"/></svg><svg class="a" style="left:829px;top:66px;" width="24" height="24" viewBox="0 0 24 24"><path d="M4 20.5L18 3.8M11 12L20.5 21" stroke="#a8a8a8" stroke-width="1.1"/><circle cx="4" cy="20.5" r="1.8" fill="#d8d8d8"/><circle cx="18" cy="3.8" r="1.8" fill="#d8d8d8"/><circle cx="11" cy="12" r="2.1" fill="#d8d8d8"/></svg><svg class="a" style="left:863px;top:67px;" width="8" height="11" viewBox="0 0 8 11"><path d="M0 0L0 10.2L2.7 7.1L6.9 7.6z" fill="#9a9a9a"/></svg><svg class="a" style="left:866px;top:66px;" width="24" height="24" viewBox="0 0 24 24"><path d="M3.5 20.5H18.5V3.8" fill="none" stroke="#8a8a8a" stroke-width="1"/><path d="M3.5 20.5Q16 18 18.5 3.8" fill="none" stroke="#a8a8a8" stroke-width="1"/><circle cx="3.5" cy="20.5" r="1.8" fill="#d8d8d8"/><circle cx="18.5" cy="20.5" r="1.8" fill="#d8d8d8"/><circle cx="18.5" cy="3.8" r="1.8" fill="#d8d8d8"/><circle cx="13.5" cy="14.5" r="1.8" fill="#d8d8d8"/></svg><svg class="a" style="left:641px;top:99px;" width="8" height="11" viewBox="0 0 8 11"><path d="M0 0L0 10.2L2.7 7.1L6.9 7.6z" fill="#9a9a9a"/></svg><svg class="a" style="left:649px;top:103px;" width="17" height="17" viewBox="0 0 17 17"><g opacity="1"><path d="M7 2.5H13.5Q16 2.5 16 5V16.5H0.5V13H11V7.5H8.5V10H5.5V7.5H4.5V4.5Q4.5 2.5 7 2.5z" fill="#8c8c8c"/><path d="M9.5 0.5h1.5v2.2h-1.5z" fill="#8c8c8c"/><path d="M1.5 14.7h9" stroke="#4a4a4a" stroke-width="0.6"/></g></svg><svg class="a" style="left:686px;top:98px;" width="20" height="17" viewBox="0 0 20 17"><defs><linearGradient id="smf" x1="0" y1="0" x2="0" y2="1"><stop offset="0" stop-color="#6a6a6a"/><stop offset="1" stop-color="#6a6a6a" stop-opacity="0.15"/></linearGradient></defs><path d="M7 2.5H13.5Q16 2.5 16 5V16.5H11V7.5H8.5V10H5.5V7.5H4.5V4.5Q4.5 2.5 7 2.5zM9.5 0.5h1.5v2.2h-1.5z" fill="url(#smf)"/></svg><svg class="a" style="left:678px;top:112px;" width="18" height="8" viewBox="0 0 18 8"><path d="M3 4H15" stroke="#c8c8c8" stroke-width="1.2"/><circle cx="3" cy="4" r="1.9" fill="#d8d8d8"/><circle cx="15" cy="4" r="1.9" fill="#d8d8d8"/></svg><svg class="a" style="left:699.8px;top:116.2px;" width="6" height="6" viewBox="0 0 6 6"><path d="M5.5 0.5V5.5H0.5z" fill="#666"/></svg><svg class="a" style="left:723px;top:98px;" width="20" height="17" viewBox="0 0 20 17"><path d="M7 2.5H13.5Q16 2.5 16 5V16.5H11V7.5H8.5V10H5.5V7.5H4.5V4.5Q4.5 2.5 7 2.5zM9.5 0.5h1.5v2.2h-1.5z" fill="url(#smf)"/></svg><svg class="a" style="left:715px;top:110px;" width="20" height="12" viewBox="0 0 20 12"><path d="M2 6.5C6 1.5 9 4 10 6.5C11.5 9.5 14 9.5 17 6" fill="none" stroke="#a0a0a0" stroke-width="1.4"/><circle cx="9.8" cy="6.5" r="2.0" fill="#d8d8d8"/></svg><svg class="a" style="left:737.1px;top:116.2px;" width="6" height="6" viewBox="0 0 6 6"><path d="M5.5 0.5V5.5H0.5z" fill="#666"/></svg><svg class="a" style="left:751px;top:100px;" width="10" height="11" viewBox="0 0 10 11"><circle cx="4" cy="4" r="2.8" fill="none" stroke="#7a7a7a" stroke-width="1"/><path d="M6 6l3 3.5" stroke="#7a7a7a" stroke-width="1.1"/></svg><svg class="a" style="left:761px;top:103px;" width="17" height="17" viewBox="0 0 17 17"><g opacity="1"><path d="M7 2.5H13.5Q16 2.5 16 5V16.5H0.5V13H11V7.5H8.5V10H5.5V7.5H4.5V4.5Q4.5 2.5 7 2.5z" fill="#8c8c8c"/><path d="M9.5 0.5h1.5v2.2h-1.5z" fill="#8c8c8c"/><path d="M1.5 14.7h9" stroke="#4a4a4a" stroke-width="0.6"/></g></svg><svg class="a" style="left:803px;top:100px;" width="24" height="22" viewBox="0 0 24 22"><defs><linearGradient id="ir" x1="0" y1="0" x2="0" y2="1"><stop offset="0" stop-color="#9a9a9a"/><stop offset="0.7" stop-color="#6c6c6c"/><stop offset="1" stop-color="#444"/></linearGradient></defs><path d="M6 3.5Q8 1.5 13 2H17Q20 2.5 21 7L22.5 12.5H2.5Q4 7.5 11 6.5L14.5 6V4.5H9z" fill="url(#ir)"/><path d="M2 13.8h21" stroke="#7a7a7a" stroke-width="1.2"/><path d="M3 16.2h19" stroke="#5a5a5a" stroke-width="1"/><path d="M4 18.4h17" stroke="#444" stroke-width="0.9"/><circle cx="18" cy="9.5" r="0.9" fill="#333"/></svg><svg class="a" style="left:852px;top:99px;" width="8" height="11" viewBox="0 0 8 11"><path d="M0 0L0 10.2L2.7 7.1L6.9 7.6z" fill="#9a9a9a"/></svg><svg class="a" style="left:859px;top:104px;" width="22" height="18" viewBox="0 0 22 18"><defs><linearGradient id="tsg" x1="0" y1="0" x2="0" y2="1"><stop offset="0" stop-color="#a0a0a0"/><stop offset="1" stop-color="#5a5a5a"/></linearGradient></defs><path d="M6.5 1Q11 5.5 15.5 1L21.5 6L18.5 10L16.5 8.8V17.5H5.5V8.8L3.5 10L0.5 6z" fill="url(#tsg)"/><path d="M6.5 1Q11 5.5 15.5 1" fill="none" stroke="#e8e8e8" stroke-width="1.3"/></svg><div class="a" style="left:627px;top:126px;width:389px;height:586px;background:#1d1d1d;"></div><svg class="a" style="left:629px;top:128px" width="385" height="582" viewBox="629 128 385 582"><rect x="629" y="128" width="385" height="582" fill="#c8c8c8"/><path d="M638.40 128V710" stroke="#bdbdbd" stroke-width="1"/><path d="M657.85 128V710" stroke="#bdbdbd" stroke-width="1"/><path d="M677.30 128V710" stroke="#bdbdbd" stroke-width="1"/><path d="M696.75 128V710" stroke="#bdbdbd" stroke-width="1"/><path d="M716.20 128V710" stroke="#bdbdbd" stroke-width="1"/><path d="M735.65 128V710" stroke="#bdbdbd" stroke-width="1"/><path d="M755.10 128V710" stroke="#bdbdbd" stroke-width="1"/><path d="M774.55 128V710" stroke="#bdbdbd" stroke-width="1"/><path d="M794.00 128V710" stroke="#bdbdbd" stroke-width="1"/><path d="M813.45 128V710" stroke="#bdbdbd" stroke-width="1"/><path d="M832.90 128V710" stroke="#bdbdbd" stroke-width="1"/><path d="M852.35 128V710" stroke="#bdbdbd" stroke-width="1"/><path d="M871.80 128V710" stroke="#bdbdbd" stroke-width="1"/><path d="M891.25 128V710" stroke="#bdbdbd" stroke-width="1"/><path d="M910.70 128V710" stroke="#bdbdbd" stroke-width="1"/><path d="M930.15 128V710" stroke="#bdbdbd" stroke-width="1"/><path d="M949.60 128V710" stroke="#bdbdbd" stroke-width="1"/><path d="M969.05 128V710" stroke="#bdbdbd" stroke-width="1"/><path d="M988.50 128V710" stroke="#bdbdbd" stroke-width="1"/><path d="M1007.95 128V710" stroke="#bdbdbd" stroke-width="1"/><path d="M629 133.40H1014" stroke="#bdbdbd" stroke-width="1"/><path d="M629 152.85H1014" stroke="#bdbdbd" stroke-width="1"/><path d="M629 172.30H1014" stroke="#bdbdbd" stroke-width="1"/><path d="M629 191.75H1014" stroke="#bdbdbd" stroke-width="1"/><path d="M629 211.20H1014" stroke="#bdbdbd" stroke-width="1"/><path d="M629 230.65H1014" stroke="#bdbdbd" stroke-width="1"/><path d="M629 250.10H1014" stroke="#bdbdbd" stroke-width="1"/><path d="M629 269.55H1014" stroke="#bdbdbd" stroke-width="1"/><path d="M629 289.00H1014" stroke="#bdbdbd" stroke-width="1"/><path d="M629 308.45H1014" stroke="#bdbdbd" stroke-width="1"/><path d="M629 327.90H1014" stroke="#bdbdbd" stroke-width="1"/><path d="M629 347.35H1014" stroke="#bdbdbd" stroke-width="1"/><path d="M629 366.80H1014" stroke="#bdbdbd" stroke-width="1"/><path d="M629 386.25H1014" stroke="#bdbdbd" stroke-width="1"/><path d="M629 405.70H1014" stroke="#bdbdbd" stroke-width="1"/><path d="M629 425.15H1014" stroke="#bdbdbd" stroke-width="1"/><path d="M629 444.60H1014" stroke="#bdbdbd" stroke-width="1"/><path d="M629 464.05H1014" stroke="#bdbdbd" stroke-width="1"/><path d="M629 483.50H1014" stroke="#bdbdbd" stroke-width="1"/><path d="M629 502.95H1014" stroke="#bdbdbd" stroke-width="1"/><path d="M629 522.40H1014" stroke="#bdbdbd" stroke-width="1"/><path d="M629 541.85H1014" stroke="#bdbdbd" stroke-width="1"/><path d="M629 561.30H1014" stroke="#bdbdbd" stroke-width="1"/><path d="M629 580.75H1014" stroke="#bdbdbd" stroke-width="1"/><path d="M629 600.20H1014" stroke="#bdbdbd" stroke-width="1"/><path d="M629 619.65H1014" stroke="#bdbdbd" stroke-width="1"/><path d="M629 639.10H1014" stroke="#bdbdbd" stroke-width="1"/><path d="M629 658.55H1014" stroke="#bdbdbd" stroke-width="1"/><path d="M629 678.00H1014" stroke="#bdbdbd" stroke-width="1"/><path d="M629 697.45H1014" stroke="#bdbdbd" stroke-width="1"/><path d="M794 128V710" stroke="#959595" stroke-width="1.1"/></svg><svg class="a" style="left:629px;top:128px" width="385" height="582" viewBox="629 128 385 582"><path d="M727 491.6H747M846 491.6H866" stroke="#7e9ab8" stroke-width="1"/><path d="M661 496.8Q668 489 677.3 483.6Q686 478.5 696 478.2Q705 479.5 711.6 486.5Q720 492.5 727.4 496.8L723.7 507.4Q694 504.5 665 507.4z" fill="none" stroke="#6fa3d8" stroke-width="9" stroke-linejoin="round"/><path d="M661 496.8Q668 489 677.3 483.6Q686 478.5 696 478.2Q705 479.5 711.6 486.5Q720 492.5 727.4 496.8L723.7 507.4Q694 504.5 665 507.4z" fill="#fff"/><path d="M661 496.8H727.4M694.4 478.5V506" stroke="#8a80c8" stroke-width="0.9" fill="none"/><path d="M679.5 485.5L684.5 490.5" stroke="#f01818" stroke-width="1.5"/><path d="M695.5 481V487.5" stroke="#f01818" stroke-width="1.3"/><path d="M708.5 487L704.5 492.5" stroke="#f01818" stroke-width="1.2"/><path d="M661 496.8Q668 489 677.3 483.6Q686 478.5 696 478.2Q705 479.5 711.6 486.5Q720 492.5 727.4 496.8L723.7 507.4Q694 504.5 665 507.4z" fill="none" stroke="#5a5a5a" stroke-width="1" stroke-linejoin="round"/><circle cx="661" cy="496.8" r="3.2" fill="#636363"/><circle cx="677.3" cy="483.6" r="3.2" fill="#636363"/><circle cx="696" cy="478.2" r="3.2" fill="#636363"/><circle cx="711.6" cy="486.5" r="3.2" fill="#636363"/><circle cx="727.4" cy="496.8" r="3.2" fill="#636363"/><circle cx="723.7" cy="507.4" r="3.2" fill="#636363"/><circle cx="665" cy="507.4" r="3.2" fill="#636363"/><path d="M752.3 464.4L773.8 456.4Q777 472 791 478.7L791 574.7Q768 575.5 746 572.7L747.5 525.2L746.6 496.8Q751 492 756.9 482.5Q752 473 752.3 464.4z" fill="none" stroke="#6fa3d8" stroke-width="9" stroke-linejoin="round"/><path d="M752.3 464.4L773.8 456.4Q777 472 791 478.7L791 574.7Q768 575.5 746 572.7L747.5 525.2L746.6 496.8Q751 492 756.9 482.5Q752 473 752.3 464.4z" fill="#fff"/><path d="M746.6 496.8H791M747.5 525.2H791" stroke="#8a80c8" stroke-width="0.9" fill="none"/><path d="M757 481.8H767" stroke="#f01818" stroke-width="1.1"/><path d="M752.3 464.4L773.8 456.4Q777 472 791 478.7L791 574.7Q768 575.5 746 572.7L747.5 525.2L746.6 496.8Q751 492 756.9 482.5Q752 473 752.3 464.4z" fill="none" stroke="#5a5a5a" stroke-width="1" stroke-linejoin="round"/><circle cx="752.3" cy="464.4" r="3.2" fill="#636363"/><circle cx="773.8" cy="456.4" r="3.2" fill="#636363"/><circle cx="791" cy="478.7" r="3.2" fill="#636363"/><circle cx="791" cy="574.7" r="3.2" fill="#636363"/><circle cx="746" cy="572.7" r="3.2" fill="#636363"/><circle cx="747.5" cy="525.2" r="3.2" fill="#636363"/><circle cx="746.6" cy="496.8" r="3.2" fill="#636363"/><circle cx="756.9" cy="482.5" r="3.2" fill="#636363"/><path d="M791 491.6H802M791 515.4H802" stroke="#4f7fb4" stroke-width="1.2"/><path d="M818.2 456.4L840.6 464.4Q841 473 835.7 482.5Q841 492 845.8 496.8L844.9 525.2L846.3 573.3Q824 576 801.9 575.3L801.9 478.7Q815 472 818.2 456.4z" fill="none" stroke="#6fa3d8" stroke-width="9" stroke-linejoin="round"/><path d="M818.2 456.4L840.6 464.4Q841 473 835.7 482.5Q841 492 845.8 496.8L844.9 525.2L846.3 573.3Q824 576 801.9 575.3L801.9 478.7Q815 472 818.2 456.4z" fill="#fff"/><path d="M801.9 496.8H845.8M801.9 525.2H844.9" stroke="#8a80c8" stroke-width="0.9" fill="none"/><path d="M826 481.8H835" stroke="#f01818" stroke-width="1.1"/><path d="M818.2 456.4L840.6 464.4Q841 473 835.7 482.5Q841 492 845.8 496.8L844.9 525.2L846.3 573.3Q824 576 801.9 575.3L801.9 478.7Q815 472 818.2 456.4z" fill="none" stroke="#5fe2fa" stroke-width="1.7" stroke-linejoin="round"/><circle cx="818.2" cy="456.4" r="3.6" fill="#4fdcf7"/><circle cx="840.6" cy="464.4" r="3.6" fill="#4fdcf7"/><circle cx="835.7" cy="482.5" r="3.6" fill="#4fdcf7"/><circle cx="845.8" cy="496.8" r="3.6" fill="#4fdcf7"/><circle cx="844.9" cy="525.2" r="3.6" fill="#4fdcf7"/><circle cx="846.3" cy="573.3" r="3.6" fill="#4fdcf7"/><circle cx="801.9" cy="575.3" r="3.6" fill="#4fdcf7"/><circle cx="801.9" cy="478.7" r="3.6" fill="#4fdcf7"/><path d="M763.8 438.1H790V440.9H763.8z" fill="none" stroke="#6fa3d8" stroke-width="7" stroke-linejoin="round"/><path d="M763.8 438.1H790V440.9H763.8z" fill="#fff" stroke="#5a5a5a" stroke-width="0.8"/><path d="M767 438.5L771.5 433.8" stroke="#f01818" stroke-width="1.1"/><ellipse cx="763.8" cy="439.5" rx="2.6" ry="3.6" fill="#636363"/><ellipse cx="787" cy="439.5" rx="2.6" ry="3.6" fill="#636363"/><ellipse cx="790.3" cy="439.5" rx="2.6" ry="3.6" fill="#636363"/><path d="M802 438.1H828.5V440.9H802z" fill="none" stroke="#6fa3d8" stroke-width="7" stroke-linejoin="round"/><path d="M802 438.1H828.5V440.9H802z" fill="#fff" stroke="#5a5a5a" stroke-width="0.8"/><path d="M825 438.5L820.5 433.8" stroke="#f01818" stroke-width="1.1"/><ellipse cx="801.8" cy="439.5" rx="2.6" ry="3.6" fill="#636363"/><ellipse cx="804.5" cy="439.5" rx="2.6" ry="3.6" fill="#636363"/><ellipse cx="828.3" cy="439.5" rx="2.6" ry="3.6" fill="#636363"/><path d="M865.5 496.8Q873 492.5 881.3 486.5Q888 479.5 897 478.2Q907 478.5 915.7 483.6Q925 489 931.7 496.8L928 507.4Q898 504.5 869.3 507.4z" fill="none" stroke="#6fa3d8" stroke-width="9" stroke-linejoin="round"/><path d="M865.5 496.8Q873 492.5 881.3 486.5Q888 479.5 897 478.2Q907 478.5 915.7 483.6Q925 489 931.7 496.8L928 507.4Q898 504.5 869.3 507.4z" fill="#fff"/><path d="M865.5 496.8H931.7M898.8 478.5V506" stroke="#8a80c8" stroke-width="0.9" fill="none"/><path d="M883.5 487L887.5 492.5" stroke="#f01818" stroke-width="1.2"/><path d="M897.5 481V487.5" stroke="#f01818" stroke-width="1.3"/><path d="M913.5 485.5L908.5 490.5" stroke="#f01818" stroke-width="1.5"/><path d="M865.5 496.8Q873 492.5 881.3 486.5Q888 479.5 897 478.2Q907 478.5 915.7 483.6Q925 489 931.7 496.8L928 507.4Q898 504.5 869.3 507.4z" fill="none" stroke="#5a5a5a" stroke-width="1" stroke-linejoin="round"/><circle cx="865.5" cy="496.8" r="3.2" fill="#636363"/><circle cx="881.3" cy="486.5" r="3.2" fill="#636363"/><circle cx="897" cy="478.2" r="3.2" fill="#636363"/><circle cx="915.7" cy="483.6" r="3.2" fill="#636363"/><circle cx="931.7" cy="496.8" r="3.2" fill="#636363"/><circle cx="928" cy="507.4" r="3.2" fill="#636363"/><circle cx="869.3" cy="507.4" r="3.2" fill="#636363"/><path d="M947.2 457.3L969.6 450.1Q978 457.5 989 457.3L989 571.9H945.2L945.8 524L944.6 496.8Q951 489 952.4 478.2Q948 467 947.2 457.3z" fill="none" stroke="#6fa3d8" stroke-width="9" stroke-linejoin="round"/><path d="M947.2 457.3L969.6 450.1Q978 457.5 989 457.3L989 571.9H945.2L945.8 524L944.6 496.8Q951 489 952.4 478.2Q948 467 947.2 457.3z" fill="#fff"/><path d="M944.6 496.8H989M945.8 524H989" stroke="#8a80c8" stroke-width="0.9" fill="none"/><path d="M953.5 477.5L962 476M953.5 479L962 477.8" stroke="#f01818" stroke-width="1"/><path d="M947.2 457.3L969.6 450.1Q978 457.5 989 457.3L989 571.9H945.2L945.8 524L944.6 496.8Q951 489 952.4 478.2Q948 467 947.2 457.3z" fill="none" stroke="#5a5a5a" stroke-width="1" stroke-linejoin="round"/><circle cx="947.2" cy="457.3" r="2.9" fill="#636363"/><circle cx="969.6" cy="450.1" r="2.9" fill="#636363"/><circle cx="989" cy="457.3" r="2.9" fill="#636363"/><circle cx="989" cy="571.9" r="2.9" fill="#636363"/><circle cx="945.2" cy="571.9" r="2.9" fill="#636363"/><circle cx="945.8" cy="524" r="2.9" fill="#636363"/><circle cx="944.6" cy="496.8" r="2.9" fill="#636363"/><circle cx="952.4" cy="478.2" r="2.9" fill="#636363"/><path d="M997.6 457.3Q1008 457.5 1020 450L1020 571.9H997.6z" fill="none" stroke="#6fa3d8" stroke-width="9" stroke-linejoin="round"/><path d="M997.6 457.3Q1008 457.5 1020 450L1020 571.9H997.6z" fill="#fff"/><path d="M997.6 496.8H1020M997.6 524H1020" stroke="#8a80c8" stroke-width="0.9" fill="none"/><path d="M997.6 457.3Q1008 457.5 1020 450L1020 571.9H997.6z" fill="none" stroke="#5a5a5a" stroke-width="1" stroke-linejoin="round"/><circle cx="997.6" cy="457.3" r="2.9" fill="#636363"/><circle cx="997.6" cy="571.9" r="2.9" fill="#636363"/><circle cx="997.6" cy="476.5" r="2.2" fill="#9a9a9a"/><circle cx="997.6" cy="493.6" r="2.2" fill="#9a9a9a"/><circle cx="997.6" cy="506" r="2.2" fill="#9a9a9a"/><circle cx="997.6" cy="519.7" r="2.2" fill="#9a9a9a"/><circle cx="997.6" cy="533.5" r="2.2" fill="#9a9a9a"/><circle cx="997.6" cy="547" r="2.2" fill="#9a9a9a"/><circle cx="997.6" cy="560.6" r="2.2" fill="#9a9a9a"/><path d="M989 511.5H997.6" stroke="#4f7fb4" stroke-width="1.2"/><path d="M976 439H1020V442.2H976z" fill="#fff" stroke="#5a5a5a" stroke-width="0.8"/><path d="M981 438L985 434M1008 438L1004 434" stroke="#f01818" stroke-width="1.1"/><circle cx="976" cy="440.6" r="2.7" fill="#636363"/><circle cx="993.5" cy="440.6" r="2.7" fill="#636363"/><circle cx="1011.5" cy="440.6" r="2.7" fill="#636363"/></svg><svg class="a" style="left:639px;top:138px;" width="27" height="27" viewBox="0 0 27 27"><rect x="0.5" y="0.5" width="26" height="25.5" rx="1.5" fill="#d2d2d2" stroke="#8e8e8e"/><rect x="1.5" y="1.5" width="24" height="23.5" rx="1" fill="none" stroke="#e2e2e2"/><path d="M4 17Q4 9 9 5.5" fill="none" stroke="#2a8ae0" stroke-width="0.9"/><path d="M8.5 5L11 5.5L23.5 18.5L22.5 19.5L8 8z" fill="#222"/><g transform="translate(1.6,17.2) scale(1.18)"><path d="M0.3 3.3Q4.5 -1.5 9.3 3.3Q4.5 7 0.3 3.3z" fill="#f4f4f4" stroke="#111" stroke-width="0.9"/><circle cx="4.8" cy="3.2" r="1.9" fill="#111"/></g></svg><svg class="a" style="left:639px;top:167px;" width="27" height="27" viewBox="0 0 27 27"><rect x="0.5" y="0.5" width="26" height="25.5" rx="1.5" fill="#d2d2d2" stroke="#8e8e8e"/><rect x="1.5" y="1.5" width="24" height="23.5" rx="1" fill="none" stroke="#e2e2e2"/><path d="M9.5 5Q13.5 8 17.5 5L23.5 10L20.5 13.5L18.5 12.3V22H8.5V12.3L6.5 13.5L3.5 10z" fill="#fff" stroke="#bbb" stroke-width="0.5"/><g transform="translate(1.6,17.2) scale(1.18)"><path d="M0.3 3.3Q4.5 -1.5 9.3 3.3Q4.5 7 0.3 3.3z" fill="#f4f4f4" stroke="#111" stroke-width="0.9"/><circle cx="4.8" cy="3.2" r="1.9" fill="#111"/></g></svg><svg class="a" style="left:639px;top:196px;" width="27" height="27" viewBox="0 0 27 27"><rect x="0.5" y="0.5" width="26" height="25.5" rx="1.5" fill="#d2d2d2" stroke="#8e8e8e"/><rect x="1.5" y="1.5" width="24" height="23.5" rx="1" fill="none" stroke="#e2e2e2"/><circle cx="14" cy="12.5" r="8.6" fill="#3c3c3c"/><path d="M14.8 8.2a1.3 1.3 0 1 1 -0.1 0zM12.2 11.2l3.4 -0.5l-1.5 6.2q0 0.8 1.4 -0.4l0.3 0.5q-2.4 2.4 -3.8 1.5q-0.9 -0.6 -0.4 -2.3l1 -4.2l-0.9 -0.2z" fill="#18b4f0"/><g transform="translate(1.6,17.2) scale(1.18)"><path d="M0.3 3.3Q4.5 -1.5 9.3 3.3Q4.5 7 0.3 3.3z" fill="#f4f4f4" stroke="#111" stroke-width="0.9"/><circle cx="4.8" cy="3.2" r="1.9" fill="#111"/></g></svg><svg class="a" style="left:639px;top:225px;" width="27" height="27" viewBox="0 0 27 27"><rect x="0.5" y="0.5" width="26" height="25.5" rx="1.5" fill="#d2d2d2" stroke="#8e8e8e"/><rect x="1.5" y="1.5" width="24" height="23.5" rx="1" fill="none" stroke="#e2e2e2"/><path d="M5 16L8 6.5Q10 6 9.5 8L8 19.5Q6 20 5 16z" fill="#f8f8f8"/><path d="M8 19.5Q12 22.5 19 21L20 18L8.5 16z" fill="#f4f4f4"/><path d="M9 6.5Q15 3.5 22.5 5.5L20 19Q13 16.5 7.6 19.5z" fill="url(#fb1)"/></svg><div class="a" style="left:1021px;top:42px;width:1px;height:509px;background:#1b1b1b;"></div><div class="a" style="left:1021px;top:556px;width:1px;height:155px;background:#1b1b1b;"></div><div class="a" style="left:1022px;top:42px;width:299px;height:20px;background:#1e1e20;"></div><svg class="a" style="left:1022px;top:46px;" width="9" height="10" viewBox="0 0 9 10"><path d="M8.5 5L4 1v2.5h-4v3h4V9z" fill="#a8a8a8"/></svg><div class="a" style="left:1034px;top:45px;width:1px;height:13px;background:#3a3a3c;"></div><div class="a t " style="left:1129px;top:45.5px;font-size:11px;color:#fff;letter-spacing:0.12px">Object Browser</div><svg class="a" style="left:1305px;top:45px;" width="12" height="11" viewBox="0 0 12 11"><path d="M6 3.2H1.2V8.8H8.2V6.2" fill="none" stroke="#8a8a8a" stroke-width="1.4"/><path d="M4.6 5.9L10 0.9M6.6 0.7h3.7v3.7" fill="none" stroke="#8a8a8a" stroke-width="1.3"/></svg><div class="a" style="left:1022px;top:62px;width:299px;height:19px;background:#202022;"></div><div class="a" style="left:1049px;top:62px;width:43px;height:19px;background:#333;background:linear-gradient(#3b3b3b,#2e2e2e)"></div><div class="a" style="left:1135px;top:63px;width:1px;height:17px;background:#2c2c2e;"></div><div class="a" style="left:1178px;top:63px;width:1px;height:17px;background:#2c2c2e;"></div><div class="a" style="left:1221px;top:63px;width:1px;height:17px;background:#2c2c2e;"></div><svg class="a" style="left:1016.8px;top:63.9px" width="24" height="15.4" viewBox="0 -11.0 24 15.4"><text x="0" y="0" font-size="11" fill="#f4f4f4">场景</text></svg><svg class="a" style="left:1059.7px;top:63.9px" width="24" height="15.4" viewBox="0 -11.0 24 15.4"><text x="0" y="0" font-size="11" fill="#f4f4f4">织物</text></svg><svg class="a" style="left:1102.7px;top:63.9px" width="24" height="15.4" viewBox="0 -11.0 24 15.4"><text x="0" y="0" font-size="11" fill="#f4f4f4">纽扣</text></svg><svg class="a" style="left:1145.7px;top:63.9px" width="24" height="15.4" viewBox="0 -11.0 24 15.4"><text x="0" y="0" font-size="11" fill="#f4f4f4">扣眼</text></svg><svg class="a" style="left:1188.7px;top:63.9px" width="24" height="15.4" viewBox="0 -11.0 24 15.4"><text x="0" y="0" font-size="11" fill="#f4f4f4">明线</text></svg><svg class="a" style="left:1232.5px;top:63.9px" width="46" height="15.4" viewBox="0 -11.0 46 15.4"><text x="0" y="0" font-size="11" fill="#f4f4f4">缝纫褶皱</text></svg><div class="a" style="left:1014px;top:62px;width:7px;height:19px;background:#2d2d2d;"></div><div class="a" style="left:1021px;top:62px;width:1px;height:19px;background:#1b1b1b;"></div><svg class="a" style="left:1290px;top:68px;" width="6" height="7" viewBox="0 0 6 7"><path d="M5.5 0.5v6L0.5 3.5z" fill="#5a5a5a"/></svg><div class="a" style="left:1302px;top:65px;width:1px;height:12px;background:#3a3a3a;"></div><svg class="a" style="left:1308.5px;top:68px;" width="6" height="7" viewBox="0 0 6 7"><path d="M0.5 0.5v6L5.5 3.5z" fill="#5a5a5a"/></svg><div class="a" style="left:1145px;top:97.7px;width:48px;height:21px;background:#2c2c2c;box-sizing:border-box;border:1px solid #232323;border-radius:1px;box-shadow:0 1px 0 #383838, inset 0 1px 0 #333"></div><div class="a" style="left:1195px;top:97.7px;width:53px;height:21px;background:#2c2c2c;box-sizing:border-box;border:1px solid #232323;border-radius:1px;box-shadow:0 1px 0 #383838, inset 0 1px 0 #333"></div><div class="a" style="left:1249px;top:97.7px;width:69px;height:21px;background:#2c2c2c;box-sizing:border-box;border:1px solid #232323;border-radius:1px;box-shadow:0 1px 0 #383838, inset 0 1px 0 #333"></div><svg class="a" style="left:1153px;top:104px;" width="9" height="9" viewBox="0 0 9 9"><path d="M4.5 1v7M1 4.5h7" stroke="#b4b4b4" stroke-width="0.9"/></svg><svg class="a" style="left:1166.3px;top:100.9px" width="24" height="15.4" viewBox="0 -11.0 24 15.4"><text x="0" y="0" font-size="11" fill="#f0f0f0">增加</text></svg><svg class="a" style="left:1204px;top:104px;" width="9" height="9" viewBox="0 0 9 9"><rect x="2.5" y="0.5" width="6" height="6" fill="#4a4a4a" stroke="#555" stroke-width="0.8"/><rect x="0.5" y="2.5" width="6" height="6" fill="#444" stroke="#5a5a5a" stroke-width="0.8"/></svg><svg class="a" style="left:1218.5px;top:100.9px" width="24" height="15.4" viewBox="0 -11.0 24 15.4"><text x="0" y="0" font-size="11" fill="#5c5c5c">复制</text></svg><svg class="a" style="left:1264px;top:104px;" width="12" height="10" viewBox="0 0 12 10"><path d="M1.5 4v4.5h6V4M3.5 4v2h2V4" fill="none" stroke="#aaa" stroke-width="1"/><path d="M9.5 1v3M8 2.5h3" stroke="#aaa" stroke-width="0.9"/></svg><svg class="a" style="left:1281px;top:100.9px" width="24" height="15.4" viewBox="0 -11.0 24 15.4"><text x="0" y="0" font-size="11" fill="#f0f0f0">应用</text></svg><div class="a" style="left:1032px;top:126px;width:280px;height:1px;background:#1e1e1e;"></div><div class="a" style="left:1032px;top:127px;width:280px;height:1px;background:#353535;"></div><svg class="a" style="left:1040px;top:141px;" width="19" height="16" viewBox="0 0 19 16"><path d="M2.5 8.5L7.5 13L16.5 3" fill="none" stroke="#3fc2f6" stroke-width="3.2"/></svg><div class="a" style="left:1069px;top:132px;width:37px;height:37px;background:#fff;"></div><div class="a t " style="left:1116px;top:143.5px;font-size:11px;color:#4ab4ea;letter-spacing:-0.09px">Default Fabric</div><svg class="a" style="left:1284px;top:142px;" width="15" height="15" viewBox="0 0 15 15"><rect x="0.5" y="0.5" width="14" height="14" fill="#333" stroke="#454545"/><path d="M3.5 3.5h8v8h-8z" fill="#666"/><path d="M6 3.5h3v3h1.6L7.5 9.5L4.4 6.5H6z" fill="#333"/></svg><div class="a" style="left:1037px;top:171px;width:270px;height:1px;background:#1e1e1e;"></div><div class="a" style="left:1037px;top:172px;width:270px;height:1px;background:#353535;"></div><div class="a" style="left:1022px;top:550px;width:299px;height:1px;background:#1b1b1b;"></div><div class="a" style="left:1022px;top:551px;width:299px;height:5px;background:#2d2d2d;"></div><div class="a" style="left:1022px;top:556px;width:299px;height:20px;background:#1e1e20;"></div><svg class="a" style="left:1022px;top:560px;" width="9" height="10" viewBox="0 0 9 10"><path d="M8.5 5L4 1v2.5h-4v3h4V9z" fill="#a8a8a8"/></svg><div class="a" style="left:1034px;top:559px;width:1px;height:13px;background:#3a3a3c;"></div><div class="a t " style="left:1132px;top:559.5px;font-size:11px;color:#fff;letter-spacing:-0.2px">Property Editor</div><svg class="a" style="left:1305px;top:559px;" width="12" height="11" viewBox="0 0 12 11"><path d="M6 3.2H1.2V8.8H8.2V6.2" fill="none" stroke="#8a8a8a" stroke-width="1.4"/><path d="M4.6 5.9L10 0.9M6.6 0.7h3.7v3.7" fill="none" stroke="#8a8a8a" stroke-width="1.3"/></svg><svg class="a" style="left:1049.2px;top:582.1px" width="24" height="15.4" viewBox="0 -11.0 24 15.4"><text x="0" y="0" font-size="11" fill="#f4f4f4">名字</text></svg><div class="a t " style="left:1194px;top:582.5px;font-size:11px;color:#f4f4f4;">59</div><div class="a" style="left:1049px;top:602px;width:247px;height:1px;background:#3a3a3a;"></div><svg class="a" style="left:1033px;top:613px;" width="11" height="8" viewBox="0 0 11 8"><path d="M0.8 0.8h9.4L5.5 7.2z" fill="#d8d8d8"/></svg><svg class="a" style="left:1049.2px;top:610.4px" width="57" height="15.4" viewBox="0 -11.0 57 15.4"><text x="0" y="0" font-size="11" fill="#4ab4ea">被选择的线</text></svg><div class="a" style="left:1049px;top:630px;width:247px;height:1px;background:#3a3a3a;"></div><div class="a t " style="left:1068px;top:639.0px;font-size:11px;color:#f4f4f4;letter-spacing:-0.5px">2D</div><svg class="a" style="left:1081.2px;top:639.0px" width="46" height="15.4" viewBox="0 -11.0 46 15.4"><text x="0" y="0" font-size="11" fill="#f4f4f4">线段长度</text></svg><div class="a t " style="left:1188.3px;top:639.0px;font-size:11px;color:#f4f4f4;letter-spacing:-0.33px">1578.2mm</div><svg class="a" style="left:1068px;top:666.8px" width="90" height="15.4" viewBox="0 -11.0 90 15.4"><text x="0" y="0" font-size="11" fill="#f4f4f4">对称修改线段长度</text></svg><div class="a t " style="left:1188.3px;top:666.8px;font-size:11px;color:#f4f4f4;letter-spacing:-0.33px">3156.4mm</div><div class="a t " style="left:1068px;top:694.5px;font-size:11px;color:#f4f4f4;letter-spacing:-0.5px">3D</div><svg class="a" style="left:1081.2px;top:694.5px" width="46" height="15.4" viewBox="0 -11.0 46 15.4"><text x="0" y="0" font-size="11" fill="#f4f4f4">线段长度</text></svg><div class="a t " style="left:1188.3px;top:694.5px;font-size:11px;color:#f4f4f4;letter-spacing:-0.33px">1574.9mm</div><div class="a" style="left:1150px;top:664px;width:40px;height:18px;background:#2d2d2d;"></div><div class="a" style="left:1068px;top:658px;width:223px;height:1px;background:#3a3a3a;"></div><div class="a" style="left:1068px;top:686px;width:223px;height:1px;background:#3a3a3a;"></div><div class="a" style="left:1303px;top:578px;width:17px;height:133px;background:#1f1f21;border-radius:2px"></div><div class="a" style="left:1303px;top:578px;width:17px;height:16px;background:#2c2c2e;border-radius:3px;box-shadow:inset 0 0 0 1px #353537"></div><svg class="a" style="left:1307px;top:583px;" width="9" height="6" viewBox="0 0 9 6"><path d="M0.8 5.2h7.4L4.5 0.8z" fill="#4e4e4e"/></svg><div class="a" style="left:1303px;top:596px;width:17px;height:18px;background:#333335;border-radius:2px"></div><div class="a" style="left:1303px;top:694px;width:17px;height:16px;background:#2c2c2e;border-radius:3px;box-shadow:inset 0 0 0 1px #353537"></div><svg class="a" style="left:1307px;top:699.5px;" width="9" height="6" viewBox="0 0 9 6"><path d="M0.8 0.8h7.4L4.5 5.2z" fill="#4e4e4e"/></svg><div class="a" style="left:1022px;top:711px;width:299px;height:1px;background:#1f1f1f;"></div>
</body></html>
